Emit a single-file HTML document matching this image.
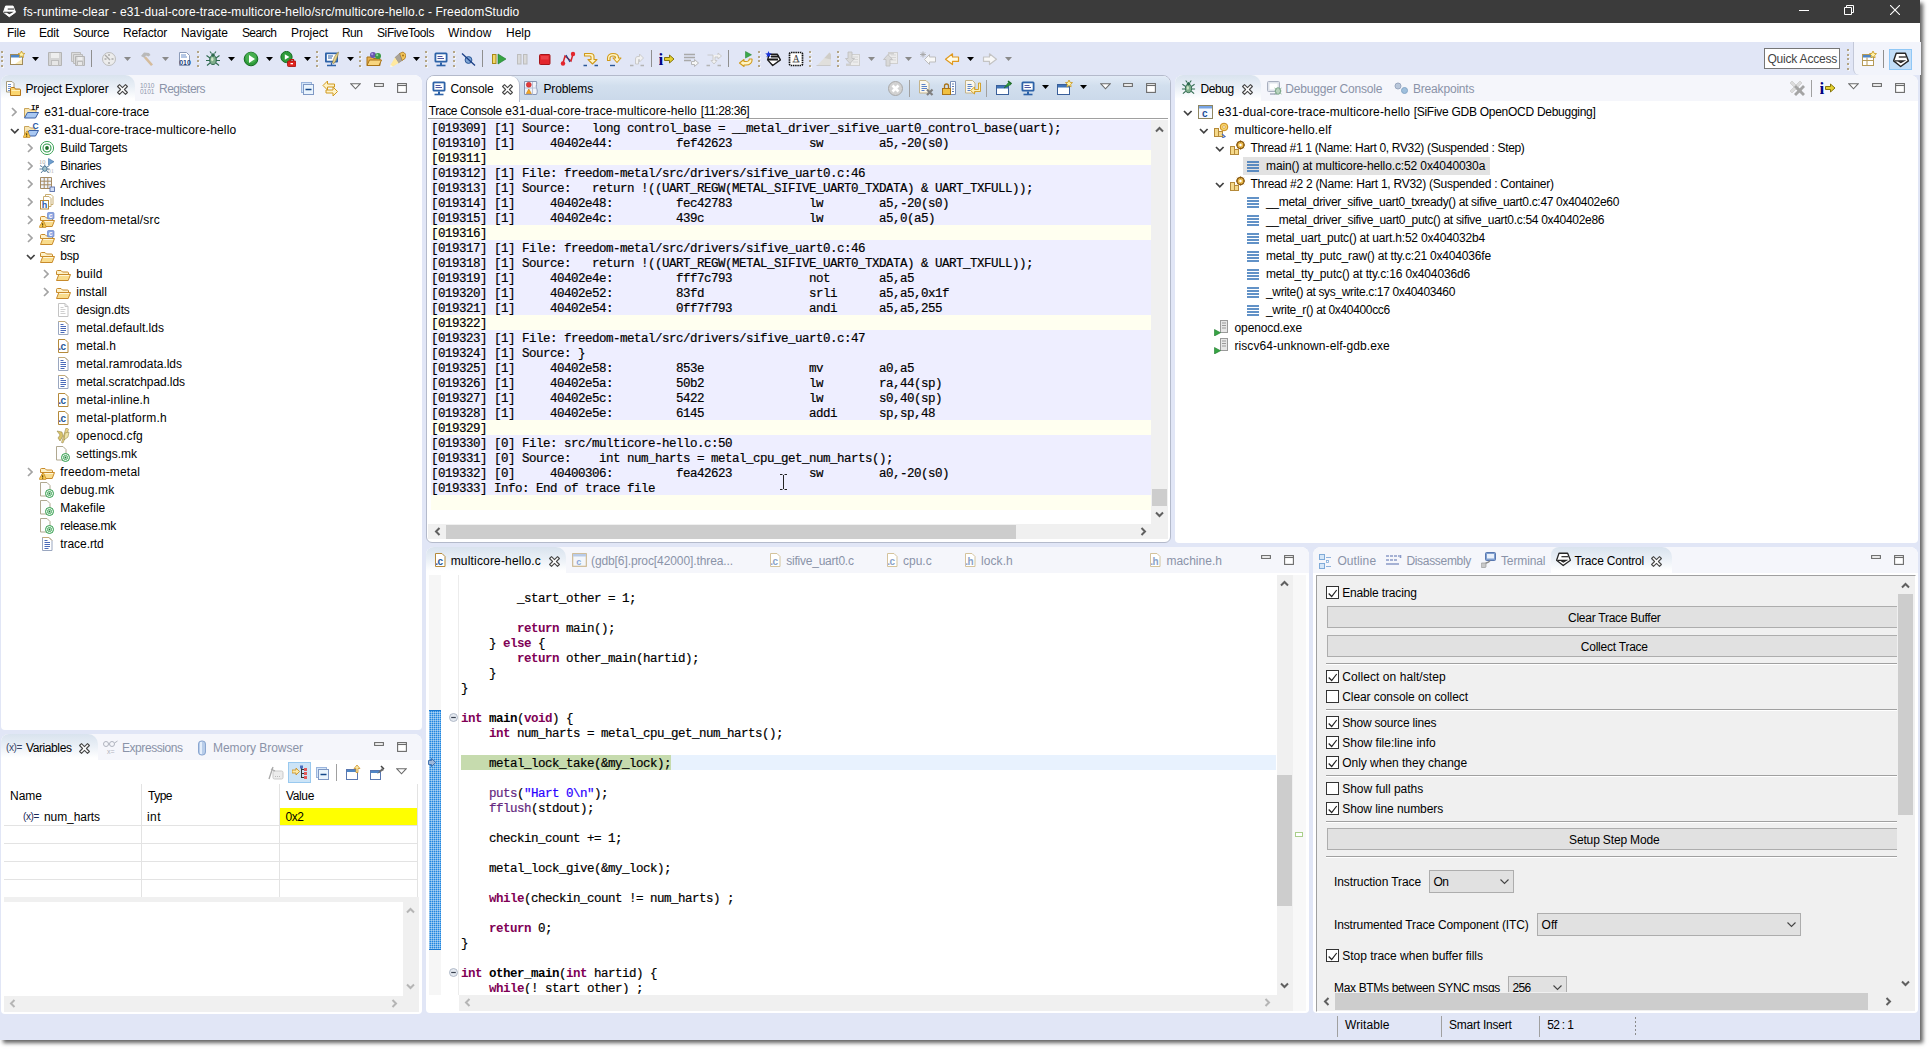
<!DOCTYPE html>
<html><head><meta charset="utf-8"><title>FreedomStudio</title><style>
html,body{margin:0;padding:0;background:#fff;}
body{width:1930px;height:1050px;position:relative;overflow:hidden;font:12px "Liberation Sans",sans-serif;color:#000;}
div,span,svg{position:absolute;}
.t{white-space:pre;line-height:18px;}
.m{white-space:pre;font-family:"Liberation Mono",monospace;font-size:12.5px;letter-spacing:-.5px;line-height:15px;-webkit-text-stroke:.2px;}
.k{font-weight:bold;color:#7f0055;position:static;-webkit-text-stroke:0;}
.s{color:#2a00ff;position:static;}
.f{color:#642880;position:static;}
.b{font-weight:bold;position:static;-webkit-text-stroke:0;}
.g{color:#8a8f99;}
.sh{left:0;top:0;width:1920px;height:1040px;box-shadow:3px 3px 4px 0 rgba(0,0,0,.62);}
.pnl{background:#fff;border-radius:7px 7px 3px 3px;overflow:hidden;}
</style></head><body>
<div class="sh"></div>
<div style="left:0px;top:0px;width:1920px;height:1040px;background:#e1e6f6;"></div>
<div style="left:0px;top:0px;width:1920px;height:23px;background:#3b3b3b;"></div>
<svg style="left:3px;top:5px;" width="13" height="13" viewBox="0 0 16 16"><path d="M3.200 1.300h9.200l3 7.600-7.700 5.600L.600 8.900z" fill="#fff" stroke="#fff" stroke-width="1.200" stroke-linejoin="round"/><path d="M5.800 5h8" stroke="#3b3b3b" stroke-width="1.400"/><path d="M.800 8.900h10L7.800 10.700 5.500 9.300" stroke="#3b3b3b" stroke-width="1.400" fill="none"/></svg>
<span class="t" style="left:23.3px;top:4px;line-height:17px;color:#fff;letter-spacing:0.136px;">fs-runtime-clear - e31-dual-core-trace-multicore-hello/src/multicore-hello.c - FreedomStudio</span>
<svg style="left:1799px;top:10px;" width="10" height="1" viewBox="0 0 10 1"><path d="M0 .5h10" stroke="#fff" stroke-width="1"/></svg>
<svg style="left:1844px;top:5px;" width="10" height="10" viewBox="0 0 10 10"><path d="M2.500 2.500V.500h7v7h-2M.500 2.500h7v7h-7z" fill="none" stroke="#fff" stroke-width="1"/></svg>
<svg style="left:1890px;top:5px;" width="10" height="10" viewBox="0 0 10 10"><path d="M0 0l10 10M10 0L0 10" stroke="#fff" stroke-width="1.100"/></svg>
<div style="left:0px;top:23px;width:1920px;height:19px;background:#fff;"></div>
<span class="t" style="left:7px;top:24px;letter-spacing:-0.209px;">File</span>
<span class="t" style="left:39px;top:24px;letter-spacing:-0.170px;">Edit</span>
<span class="t" style="left:73px;top:24px;letter-spacing:-0.337px;">Source</span>
<span class="t" style="left:123px;top:24px;letter-spacing:-0.169px;">Refactor</span>
<span class="t" style="left:181px;top:24px;letter-spacing:-0.045px;">Navigate</span>
<span class="t" style="left:242px;top:24px;letter-spacing:-0.637px;">Search</span>
<span class="t" style="left:291px;top:24px;letter-spacing:-0.050px;">Project</span>
<span class="t" style="left:342px;top:24px;letter-spacing:-0.571px;">Run</span>
<span class="t" style="left:377px;top:24px;letter-spacing:-0.396px;">SiFiveTools</span>
<span class="t" style="left:448px;top:24px;letter-spacing:0.137px;">Window</span>
<span class="t" style="left:506px;top:24px;letter-spacing:0.005px;">Help</span>
<div style="left:1px;top:51.0px;width:2px;height:2px;background:#b3a585;box-shadow:1px 1px 0 rgba(255,255,255,.6);"></div>
<div style="left:1px;top:55.7px;width:2px;height:2px;background:#b3a585;box-shadow:1px 1px 0 rgba(255,255,255,.6);"></div>
<div style="left:1px;top:60.3px;width:2px;height:2px;background:#b3a585;box-shadow:1px 1px 0 rgba(255,255,255,.6);"></div>
<div style="left:1px;top:65.0px;width:2px;height:2px;background:#b3a585;box-shadow:1px 1px 0 rgba(255,255,255,.6);"></div>
<svg style="left:9px;top:51px;" width="16" height="16" viewBox="0 0 16 16"><rect x="1.5" y="3.5" width="12" height="10" fill="#fff" stroke="#a08a5a"/><rect x="2" y="4" width="11" height="2.5" fill="#4f86c6"/><path d="M12.5 0l1 2.2 2.3.3-1.7 1.6.4 2.3-2-1.1-2 1.1.4-2.3L9.2 2.5l2.3-.3z" fill="#fff3a8" stroke="#c9971c" stroke-width=".8"/><path d="M6 13l7-5v5z" fill="#f6e3a6" opacity=".8"/></svg>
<svg style="left:32px;top:57px;" width="7" height="4" viewBox="0 0 7 4"><path d="M0 0h7l-3.5 4z" fill="#000"/></svg>
<svg style="left:47px;top:51px;" width="16" height="16" viewBox="0 0 16 16"><path d="M1.5 1.5h13v13h-13z" fill="#d4d4d4" stroke="#b4b4b4"/><rect x="4" y="2" width="8" height="5" fill="#eee"/><rect x="4.5" y="9.5" width="7" height="5" fill="#e6e6e6" stroke="#bdbdbd"/></svg>
<svg style="left:70px;top:51px;" width="16" height="16" viewBox="0 0 16 16"><path d="M1.5 1.5h9v9h-9z" fill="#dcdcdc" stroke="#bcbcbc"/><path d="M3.5 3.5h9v9h-9z" fill="#dcdcdc" stroke="#bcbcbc"/><path d="M5.5 5.5h9v9h-9z" fill="#d4d4d4" stroke="#b4b4b4"/><rect x="7.5" y="6" width="5" height="3" fill="#eee"/><rect x="7.5" y="10.5" width="5" height="4" fill="#e8e8e8" stroke="#bdbdbd"/></svg>
<div style="left:91px;top:50px;width:1px;height:17px;background:#8f8f8f;"></div>
<svg style="left:101px;top:51px;" width="16" height="16" viewBox="0 0 16 16"><circle cx="8" cy="8" r="6.5" fill="#ececec" stroke="#bdbdbd"/><path d="M4 4l5 5M8 3v2M12.5 8h-2M8 13v-2M3.5 8h2" stroke="#aaa" stroke-width="1.4" fill="none"/></svg>
<svg style="left:124px;top:57px;" width="7" height="4" viewBox="0 0 7 4"><path d="M0 0h7l-3.5 4z" fill="#8a8a8a"/></svg>
<svg style="left:139px;top:51px;" width="16" height="16" viewBox="0 0 16 16"><path d="M2 5l3-3.5 5 .5 1.5 2-2 1.5-2.5-1L5.5 7z" fill="#b9b9b9"/><path d="M7 5.5l7 8-2 1.5-7-8z" fill="#d2b48c" opacity=".85"/></svg>
<svg style="left:162px;top:57px;" width="7" height="4" viewBox="0 0 7 4"><path d="M0 0h7l-3.5 4z" fill="#8a8a8a"/></svg>
<svg style="left:176px;top:51px;" width="16" height="16" viewBox="0 0 16 16"><path d="M3.5 1.5h7l3 3v10h-10z" fill="#fff" stroke="#8c9bb8"/><path d="M5 4h5M5 6h6" stroke="#6b8fc9"/><text x="3.2" y="13.5" font-family="Liberation Sans" font-size="7" font-weight="bold" fill="#1d3f7a">010</text></svg>
<div style="left:197px;top:51.0px;width:2px;height:2px;background:#b3a585;box-shadow:1px 1px 0 rgba(255,255,255,.6);"></div>
<div style="left:197px;top:55.7px;width:2px;height:2px;background:#b3a585;box-shadow:1px 1px 0 rgba(255,255,255,.6);"></div>
<div style="left:197px;top:60.3px;width:2px;height:2px;background:#b3a585;box-shadow:1px 1px 0 rgba(255,255,255,.6);"></div>
<div style="left:197px;top:65.0px;width:2px;height:2px;background:#b3a585;box-shadow:1px 1px 0 rgba(255,255,255,.6);"></div>
<svg style="left:205px;top:51px;" width="16" height="16" viewBox="0 0 16 16"><ellipse cx="8" cy="9" rx="3.3" ry="4.5" fill="#7fae8b" stroke="#2f6a4f"/><circle cx="8" cy="4" r="1.8" fill="#2f6a4f"/><path d="M5 7L1.5 4.5M5 9.5H1M5 12l-3 2.5M11 7l3.5-2.5M11 9.5h4M11 12l3 2.5M6.5 2.5L5 .5M9.500 2.5L11 .5" stroke="#2f6a4f" stroke-width="1.1" fill="none"/><ellipse cx="7.3" cy="8.3" rx="1.2" ry="2" fill="#cfe6c8"/></svg>
<svg style="left:228px;top:57px;" width="7" height="4" viewBox="0 0 7 4"><path d="M0 0h7l-3.5 4z" fill="#000"/></svg>
<svg style="left:243px;top:51px;" width="16" height="16" viewBox="0 0 16 16"><circle cx="8" cy="8" r="6.8" fill="#2e9b3a" stroke="#156b22"/><circle cx="8" cy="6.5" r="5.5" fill="#5bc061" opacity=".55"/><path d="M6 4l6 4-6 4z" fill="#fff"/></svg>
<svg style="left:266px;top:57px;" width="7" height="4" viewBox="0 0 7 4"><path d="M0 0h7l-3.5 4z" fill="#000"/></svg>
<svg style="left:280px;top:51px;" width="16" height="16" viewBox="0 0 16 16"><circle cx="6.5" cy="6" r="5.6" fill="#2e9b3a" stroke="#156b22"/><path d="M4.8 3.2l4.6 2.8-4.6 2.800z" fill="#fff"/><rect x="7.5" y="10" width="8.5" height="5.500" rx="1" fill="#e0241e" stroke="#a00e0a" stroke-width=".8"/><path d="M10 10V8.500h3.500V10" stroke="#c0150f" fill="none" stroke-width="1.2"/><rect x="10.5" y="12" width="2.5" height="1.3" fill="#fff"/></svg>
<svg style="left:304px;top:57px;" width="7" height="4" viewBox="0 0 7 4"><path d="M0 0h7l-3.5 4z" fill="#000"/></svg>
<div style="left:316px;top:51.0px;width:2px;height:2px;background:#b3a585;box-shadow:1px 1px 0 rgba(255,255,255,.6);"></div>
<div style="left:316px;top:55.7px;width:2px;height:2px;background:#b3a585;box-shadow:1px 1px 0 rgba(255,255,255,.6);"></div>
<div style="left:316px;top:60.3px;width:2px;height:2px;background:#b3a585;box-shadow:1px 1px 0 rgba(255,255,255,.6);"></div>
<div style="left:316px;top:65.0px;width:2px;height:2px;background:#b3a585;box-shadow:1px 1px 0 rgba(255,255,255,.6);"></div>
<svg style="left:324px;top:51px;" width="16" height="16" viewBox="0 0 16 16"><rect x="1" y="1.5" width="13" height="10" rx="1" fill="#2d62a8"/><rect x="2.8" y="3.2" width="9.4" height="6.500" fill="#fff"/><path d="M4 5h5M4 7h4" stroke="#2d62a8"/><path d="M3 14.5h9M7.500 11.500v3" stroke="#2d62a8" stroke-width="1.300"/><path d="M14.5 1c-3 2-5 6-6 11l1.500.5c2-3 4-7 4.500-11.500z" fill="#e8d38a" stroke="#8a7a3a" stroke-width=".6"/></svg>
<svg style="left:347px;top:57px;" width="7" height="4" viewBox="0 0 7 4"><path d="M0 0h7l-3.5 4z" fill="#000"/></svg>
<div style="left:359px;top:51.0px;width:2px;height:2px;background:#b3a585;box-shadow:1px 1px 0 rgba(255,255,255,.6);"></div>
<div style="left:359px;top:55.7px;width:2px;height:2px;background:#b3a585;box-shadow:1px 1px 0 rgba(255,255,255,.6);"></div>
<div style="left:359px;top:60.3px;width:2px;height:2px;background:#b3a585;box-shadow:1px 1px 0 rgba(255,255,255,.6);"></div>
<div style="left:359px;top:65.0px;width:2px;height:2px;background:#b3a585;box-shadow:1px 1px 0 rgba(255,255,255,.6);"></div>
<svg style="left:366px;top:51px;" width="16" height="16" viewBox="0 0 16 16"><path d="M1 6h5l1.500 1.500h6.500v7h-13z" fill="#e6b04d" stroke="#a97318"/><path d="M1 14.5l2.500-5.500h12l-2.500 5.500z" fill="#f7d580" stroke="#a97318"/><circle cx="7" cy="4" r="3" fill="#6a55b0"/><circle cx="6.2" cy="3.2" r="1.100" fill="#a99be0"/><circle cx="12" cy="5" r="3" fill="#3c9a48"/><circle cx="11.2" cy="4.2" r="1.100" fill="#8fd59a"/></svg>
<svg style="left:390px;top:51px;" width="16" height="16" viewBox="0 0 16 16"><path d="M9.500 2.500l3.500-1.500 3 2.500-1 4-3 2z" fill="#f2c55a" stroke="#a97318" stroke-width=".8"/><circle cx="13" cy="4.500" r="1" fill="#a97318"/><path d="M9.500 2.500l2.500 7-3.500 2.500-3.500-5.500z" fill="#a9a39a" stroke="#8a7a5a" stroke-width=".5"/><path d="M5 6.500l3.500 5.500L3 15.500.500 14z" fill="#ffe9a0"/><path d="M.500 14l2.500 1.500-2.800.500z" fill="#fffbe0"/></svg>
<svg style="left:413px;top:57px;" width="7" height="4" viewBox="0 0 7 4"><path d="M0 0h7l-3.5 4z" fill="#000"/></svg>
<div style="left:425px;top:51.0px;width:2px;height:2px;background:#b3a585;box-shadow:1px 1px 0 rgba(255,255,255,.6);"></div>
<div style="left:425px;top:55.7px;width:2px;height:2px;background:#b3a585;box-shadow:1px 1px 0 rgba(255,255,255,.6);"></div>
<div style="left:425px;top:60.3px;width:2px;height:2px;background:#b3a585;box-shadow:1px 1px 0 rgba(255,255,255,.6);"></div>
<div style="left:425px;top:65.0px;width:2px;height:2px;background:#b3a585;box-shadow:1px 1px 0 rgba(255,255,255,.6);"></div>
<svg style="left:433px;top:51px;" width="16" height="16" viewBox="0 0 16 16"><rect x="1.5" y="1.500" width="13" height="10" rx="1.500" fill="#2d62a8"/><rect x="3.300" y="3.300" width="9.400" height="6.400" fill="#fff"/><path d="M4.500 5.500h5M4.500 7.500h6.500" stroke="#4b55a0"/><path d="M3.500 14.500h9" stroke="#2d62a8" stroke-width="1.600"/><path d="M8 11.500v3" stroke="#2d62a8" stroke-width="2"/></svg>
<div style="left:453px;top:51.0px;width:2px;height:2px;background:#b3a585;box-shadow:1px 1px 0 rgba(255,255,255,.6);"></div>
<div style="left:453px;top:55.7px;width:2px;height:2px;background:#b3a585;box-shadow:1px 1px 0 rgba(255,255,255,.6);"></div>
<div style="left:453px;top:60.3px;width:2px;height:2px;background:#b3a585;box-shadow:1px 1px 0 rgba(255,255,255,.6);"></div>
<div style="left:453px;top:65.0px;width:2px;height:2px;background:#b3a585;box-shadow:1px 1px 0 rgba(255,255,255,.6);"></div>
<svg style="left:460px;top:51px;" width="16" height="16" viewBox="0 0 16 16"><circle cx="8.500" cy="9" r="3.400" fill="#7fa6d6" stroke="#2b5797"/><path d="M2 2.500l13 12" stroke="#1b3f86" stroke-width="1.300"/></svg>
<div style="left:482px;top:50px;width:1px;height:17px;background:#8f8f8f;"></div>
<svg style="left:491px;top:51px;" width="16" height="16" viewBox="0 0 16 16"><rect x="1.500" y="3.500" width="3.500" height="9" fill="#f3d768" stroke="#a88916"/><path d="M7 3l8 5-8 5z" fill="#36a443" stroke="#1d7a2a" stroke-width=".6"/></svg>
<svg style="left:514px;top:51px;" width="16" height="16" viewBox="0 0 16 16"><rect x="3.500" y="3.500" width="3.500" height="9.500" fill="#dadada" stroke="#bdbdbd"/><rect x="9.500" y="3.500" width="3.500" height="9.500" fill="#dadada" stroke="#bdbdbd"/></svg>
<svg style="left:537px;top:51px;" width="16" height="16" viewBox="0 0 16 16"><rect x="2.500" y="3.500" width="10.500" height="10" rx="1" fill="#e3262d" stroke="#a5161b"/><rect x="4" y="5" width="7.500" height="3.500" fill="#f0545a" opacity=".6"/></svg>
<svg style="left:560px;top:51px;" width="16" height="16" viewBox="0 0 16 16"><path d="M3 12l2-7 6 5 2-7" stroke="#d4252c" stroke-width="1.500" fill="none"/><circle cx="3" cy="12.500" r="2.200" fill="#e3262d"/><circle cx="13" cy="3" r="2.200" fill="#e3262d"/><path d="M6 4l4 7" stroke="#1b3f86" stroke-width="1.200"/></svg>
<svg style="left:583px;top:51px;" width="16" height="16" viewBox="0 0 16 16"><path d="M1.500 2.500h6c2.500 0 3.500 1 3.500 3v3h3L9.500 13 5 8.500h3V6c0-.700-.300-1-1-1H1.500z" fill="#fff4c4" stroke="#d19a1a" stroke-width="1.100" stroke-linejoin="round"/><path d="M.500 14.500h3.500M11.500 14.500H15" stroke="#2b5797" stroke-width="1.400"/></svg>
<svg style="left:606px;top:51px;" width="16" height="16" viewBox="0 0 16 16"><path d="M1.500 9.500V7c0-3 2.500-4.500 5.500-4.500S12.500 4 12.500 6.500v.500H15l-4 4.500-4-4.500h2.500v-.500c0-1-.800-1.500-2.500-1.500S4 5.500 4 7v2.500z" fill="#fff4c4" stroke="#d19a1a" stroke-width="1.100" stroke-linejoin="round"/><path d="M4 14.500h5" stroke="#2b5797" stroke-width="1.400"/></svg>
<svg style="left:629px;top:51px;" width="16" height="16" viewBox="0 0 16 16"><path d="M6.500 13V8c0-1.500.800-2.500 2.500-2.500h1.500V3L14.500 7l-4 4V8.500H9.500V13z" fill="#f1f1f1" stroke="#c6c6c6" stroke-width=".9" stroke-linejoin="round"/><path d="M1 14.500h3.500M11.500 14.500H15" stroke="#b4b4b4" stroke-width="1.400"/></svg>
<div style="left:651px;top:50px;width:1px;height:17px;background:#8f8f8f;"></div>
<svg style="left:659px;top:51px;" width="16" height="16" viewBox="0 0 16 16"><text x="-.500" y="13.500" font-family="Liberation Serif" font-size="17" font-weight="bold" fill="#000080">i</text><path d="M5.500 6.500h5V4L15 8l-4.500 4V9.500h-5z" fill="#e4d030" stroke="#7a6a00" stroke-width=".9" stroke-linejoin="round"/></svg>
<svg style="left:683px;top:51px;" width="16" height="16" viewBox="0 0 16 16"><path d="M1 3.500h11M1 6.500h11M1 9.500h7" stroke="#a9a9a9" stroke-width="1.600"/><path d="M8.500 10.500h3V8.500L15.500 12l-4 3.500v-2h-3z" fill="#f6f6f6" stroke="#b0b0b0" stroke-width=".9" stroke-linejoin="round"/></svg>
<svg style="left:706px;top:51px;" width="16" height="16" viewBox="0 0 16 16"><path d="M1.500 4h5.500v5.500H5l3 3.500 3-3.500H9V6h3v2l3.500-3L12 2v2" fill="#f2f2f2" stroke="#c6c6c6" stroke-width=".9" stroke-linejoin="round"/><path d="M.500 14.500H4M11.500 14.500H15" stroke="#b4b4b4" stroke-width="1.400"/></svg>
<div style="left:728px;top:50px;width:1px;height:17px;background:#8f8f8f;"></div>
<svg style="left:738px;top:51px;" width="16" height="16" viewBox="0 0 16 16"><path d="M7.500 .500l6 3.300-6 3.300z" fill="#3aa84a" stroke="#1d7a2a" stroke-width=".5"/><path d="M14 8c.500 3.500-2 6-6 6H6v1.500L1.500 12 6 8.500V10.500h2c2 0 3.300-.800 3.200-2.500z" fill="#fff4c4" stroke="#d19a1a" stroke-width="1.100" stroke-linejoin="round"/></svg>
<div style="left:758px;top:51.0px;width:2px;height:2px;background:#b3a585;box-shadow:1px 1px 0 rgba(255,255,255,.6);"></div>
<div style="left:758px;top:55.7px;width:2px;height:2px;background:#b3a585;box-shadow:1px 1px 0 rgba(255,255,255,.6);"></div>
<div style="left:758px;top:60.3px;width:2px;height:2px;background:#b3a585;box-shadow:1px 1px 0 rgba(255,255,255,.6);"></div>
<div style="left:758px;top:65.0px;width:2px;height:2px;background:#b3a585;box-shadow:1px 1px 0 rgba(255,255,255,.6);"></div>
<svg style="left:765px;top:51px;" width="16" height="16" viewBox="0 0 16 16"><path d="M4.200 3.300h8.200l3 5.600-7.700 5.600L2.600 8.900z" fill="#fff" stroke="#1a1a1a" stroke-width="1.400" stroke-linejoin="round"/><path d="M6 5.500h8M3 8.500h10" stroke="#1a1a1a" stroke-width="1.800"/><path d="M3.500 0l.9 2.300 2.400.100-1.900 1.500.7 2.300-2.100-1.300-2 1.300.6-2.300L.2 2.400l2.400-.100z" fill="#1b36d8"/></svg>
<svg style="left:788px;top:51px;" width="16" height="16" viewBox="0 0 16 16"><rect x="1.500" y="1.500" width="13" height="13" rx="1.500" fill="#fff" stroke="#111" stroke-width="1.700" stroke-dasharray="1.500 .700"/><text x="4.800" y="11.300" font-family="Liberation Serif" font-size="9.500" fill="#333">A</text><rect x="4.500" y="10.600" width="7" height="1" fill="#777"/></svg>
<div style="left:809px;top:51.0px;width:2px;height:2px;background:#b3a585;box-shadow:1px 1px 0 rgba(255,255,255,.6);"></div>
<div style="left:809px;top:55.7px;width:2px;height:2px;background:#b3a585;box-shadow:1px 1px 0 rgba(255,255,255,.6);"></div>
<div style="left:809px;top:60.3px;width:2px;height:2px;background:#b3a585;box-shadow:1px 1px 0 rgba(255,255,255,.6);"></div>
<div style="left:809px;top:65.0px;width:2px;height:2px;background:#b3a585;box-shadow:1px 1px 0 rgba(255,255,255,.6);"></div>
<svg style="left:816px;top:51px;" width="16" height="16" viewBox="0 0 16 16"><path d="M1 14.500L13.500 1.500l1.500 1.500v11.500z" fill="#e0dfdc"/><path d="M.500 14.500h14" stroke="#c9c9c9"/><path d="M8.500 7l5-5.500 1.500 2v5z" fill="#cfcdc8"/></svg>
<div style="left:837px;top:51.0px;width:2px;height:2px;background:#b3a585;box-shadow:1px 1px 0 rgba(255,255,255,.6);"></div>
<div style="left:837px;top:55.7px;width:2px;height:2px;background:#b3a585;box-shadow:1px 1px 0 rgba(255,255,255,.6);"></div>
<div style="left:837px;top:60.3px;width:2px;height:2px;background:#b3a585;box-shadow:1px 1px 0 rgba(255,255,255,.6);"></div>
<div style="left:837px;top:65.0px;width:2px;height:2px;background:#b3a585;box-shadow:1px 1px 0 rgba(255,255,255,.6);"></div>
<svg style="left:845px;top:51px;" width="16" height="16" viewBox="0 0 16 16"><rect x="5.500" y="3.500" width="9" height="11" fill="#ececec" stroke="#cfcfcf"/><path d="M8 6h5M8 8.500h5M8 11h5" stroke="#d6d6d6"/><path d="M3 1h4v6.500h2.500L5 12.500.5 7.500H3z" fill="#d9d9d9" stroke="#bdbdbd" stroke-width=".8"/><rect x="1" y="12.500" width="5" height="2.500" fill="#cfcfcf"/></svg>
<svg style="left:868px;top:57px;" width="7" height="4" viewBox="0 0 7 4"><path d="M0 0h7l-3.5 4z" fill="#8a8a8a"/></svg>
<svg style="left:883px;top:51px;" width="16" height="16" viewBox="0 0 16 16"><rect x="5.500" y="1.500" width="9" height="11" fill="#ececec" stroke="#cfcfcf"/><path d="M8 4h5M8 6.500h5M8 9h5" stroke="#d6d6d6"/><path d="M3 15h4V8.500h2.500L5 3.500.5 8.500H3z" fill="#d9d9d9" stroke="#bdbdbd" stroke-width=".8"/><rect x="6" y="1" width="5" height="2.500" fill="#cfcfcf"/></svg>
<svg style="left:905px;top:57px;" width="7" height="4" viewBox="0 0 7 4"><path d="M0 0h7l-3.5 4z" fill="#8a8a8a"/></svg>
<svg style="left:920px;top:51px;" width="16" height="16" viewBox="0 0 16 16"><path d="M15.500 6h-6V3.500L4.500 8.500l5 5V11h6z" fill="#f8f8f8" stroke="#bdbdbd" stroke-width="1" stroke-linejoin="round"/><path d="M3 .500v6M0 3.500h6M1 1.500l4 4M5 1.500l-4 4" stroke="#a6a6a6" stroke-width=".9"/></svg>
<svg style="left:944px;top:51px;" width="16" height="16" viewBox="0 0 16 16"><path d="M14.500 6H8.500V2.800L1.500 8.200l7 5.400v-3.200h6z" fill="#fffbe6" stroke="#e09a20" stroke-width="1.200" stroke-linejoin="round"/></svg>
<svg style="left:967px;top:57px;" width="7" height="4" viewBox="0 0 7 4"><path d="M0 0h7l-3.5 4z" fill="#000"/></svg>
<svg style="left:982px;top:51px;" width="16" height="16" viewBox="0 0 16 16"><path d="M1.500 6h6V2.800l7 5.400-7 5.400v-3.200h-6z" fill="#f8f8f8" stroke="#c4c4c4" stroke-width="1.200" stroke-linejoin="round"/></svg>
<svg style="left:1005px;top:57px;" width="7" height="4" viewBox="0 0 7 4"><path d="M0 0h7l-3.5 4z" fill="#8a8a8a"/></svg>
<div style="left:1853px;top:42px;width:67px;height:33px;background:#f2f4fb;border-left:1px solid #c3c8d8;border-bottom-left-radius:6px;"></div>
<div style="left:1764px;top:48px;width:76px;height:21px;background:#fff;border:1px solid #767676;box-sizing:border-box;"></div>
<span class="t" style="left:1767.5px;top:51px;line-height:17px;color:#444;letter-spacing:-0.210px;">Quick Access</span>
<div style="left:1847px;top:49.0px;width:2px;height:2px;background:#b3a585;box-shadow:1px 1px 0 rgba(255,255,255,.6);"></div>
<div style="left:1847px;top:53.7px;width:2px;height:2px;background:#b3a585;box-shadow:1px 1px 0 rgba(255,255,255,.6);"></div>
<div style="left:1847px;top:58.3px;width:2px;height:2px;background:#b3a585;box-shadow:1px 1px 0 rgba(255,255,255,.6);"></div>
<div style="left:1847px;top:63.0px;width:2px;height:2px;background:#b3a585;box-shadow:1px 1px 0 rgba(255,255,255,.6);"></div>
<div style="left:1847px;top:67.7px;width:2px;height:2px;background:#b3a585;box-shadow:1px 1px 0 rgba(255,255,255,.6);"></div>
<svg style="left:1861px;top:51px;" width="16" height="16" viewBox="0 0 16 16"><rect x="1.500" y="3.500" width="11" height="11" fill="#fff" stroke="#b59a57"/><rect x="2" y="4" width="10" height="2.500" fill="#4f86c6"/><path d="M2 9.500h10M6 6.500v8" stroke="#b59a57"/><path d="M12 0l1 2.300 2.500.3-1.800 1.700.4 2.500-2.100-1.200-2.100 1.200.4-2.500L8.500 2.600l2.500-.3z" fill="#fff3a8" stroke="#c9971c" stroke-width=".8"/></svg>
<div style="left:1883px;top:50px;width:1px;height:18px;background:#8f8f8f;"></div>
<div style="left:1889px;top:49px;width:23px;height:21px;background:#c2def8;border:1px solid #90c8f6;box-sizing:border-box;"></div>
<svg style="left:1893px;top:52px;" width="16" height="16" viewBox="0 0 16 16"><path d="M3.200 1.300h9.200l3 7.600-7.700 5.600L.600 8.900z" fill="#fff" stroke="#262626" stroke-width="1.400" stroke-linejoin="round"/><path d="M5.800 5h7.300" stroke="#262626" stroke-width="1.300"/><path d="M1.600 8.900h9.200L7.800 10.600 5.500 9.200" stroke="#262626" stroke-width="1.300" fill="none"/></svg>
<div style="left:1px;top:75px;width:421px;height:655px;background:#fff;border-radius:8px 8px 4px 4px;"></div>
<div style="left:1px;top:75px;width:421px;height:26px;background:#f5f6fb;border-radius:8px 8px 0 0;"></div>
<div style="left:1px;top:75px;width:134px;height:26px;background:linear-gradient(#d9e3ee,#e9eff6 45%,#fff 92%);border-radius:8px 10px 0 0;"></div>
<svg style="left:6px;top:80px;" width="16" height="16" viewBox="0 0 16 16"><path d="M.500 1.500h5.500l2 2v8.500h-7.500z" fill="#fff" stroke="#a59a7a"/><path d="M2 4.500h3M2 6.500h3M2 8.500h2M2 10.500h2" stroke="#5a82c8" stroke-width=".9"/><path d="M4.500 15.500v-7c0-.600.400-1 1-1h2.500c.500 0 .800.300 1 .800l.300.700h4.200c.600 0 1 .400 1 1v5.500z" fill="#fbd670" stroke="#b5761a" stroke-linejoin="round"/><path d="M5.500 10.500h8.500" stroke="#fff0b8"/></svg>
<span class="t" style="left:25.5px;top:80px;letter-spacing:-0.148px;">Project Explorer</span>
<svg style="left:117px;top:84px;" width="11" height="11" viewBox="0 0 11 11"><path d="M.600 2.500l1.900-1.900 3 3 3-3 1.900 1.900-3 3 3 3-1.900 1.900-3-3-3 3L.600 8.500l3-3z" fill="#fff" stroke="#474747" stroke-width="1.100" stroke-linejoin="round"/></svg>
<svg style="left:140px;top:80px;" width="16" height="16" viewBox="0 0 16 16"><text x="0" y="7.500" font-family="Liberation Sans" font-size="6.800" fill="#8f98ad" textLength="14.500" lengthAdjust="spacingAndGlyphs">1010</text><text x="0" y="14" font-family="Liberation Sans" font-size="6.800" fill="#8f98ad" textLength="14.500" lengthAdjust="spacingAndGlyphs">0101</text></svg>
<span class="t" style="left:159px;top:80px;color:#8a93a8;letter-spacing:-0.520px;">Registers</span>
<svg style="left:300px;top:80px;" width="16" height="16" viewBox="0 0 16 16"><rect x="1.500" y="2.500" width="10" height="10" fill="#d3e5f8" stroke="#9ab4dc"/><rect x="3.500" y="4.500" width="10" height="10" fill="#eaf4fd" stroke="#7f98c4"/><path d="M5.500 9.500h6" stroke="#14488a" stroke-width="1.500"/></svg>
<svg style="left:321.5px;top:79.5px;" width="16" height="16" viewBox="0 0 16 16"><path d="M1 5.500L5.500 1v3h7v3h-7v3z" fill="#fff3c8" stroke="#d09a20" stroke-linejoin="round"/><path d="M15.500 11.500L11 7v3H4v3h7v3z" fill="#fff3c8" stroke="#d09a20" stroke-linejoin="round"/></svg>
<svg style="left:350px;top:83px;" width="11" height="7" viewBox="0 0 11 7"><path d="M.7.700h9.600L5.500 5.800z" fill="#fff" stroke="#6b6b6b" stroke-width="1.100"/></svg>
<svg style="left:374px;top:83px;" width="10" height="4" viewBox="0 0 10 4"><rect x=".600" y=".600" width="8.800" height="2.800" fill="#fff" stroke="#6b6b6b" stroke-width="1.100"/></svg>
<svg style="left:397px;top:83px;" width="10" height="10" viewBox="0 0 10 10"><rect x=".600" y=".600" width="8.800" height="8.800" fill="#fff" stroke="#6b6b6b" stroke-width="1.100"/><path d="M.6 2.500h8.800" stroke="#6b6b6b" stroke-width="1.100"/></svg>
<svg style="left:11px;top:107px;" width="6" height="10" viewBox="0 0 6 10"><path d="M1 1l4 4-4 4" fill="none" stroke="#a3a3a3" stroke-width="1.700"/></svg>
<svg style="left:23px;top:104px;" width="16" height="16" viewBox="0 0 16 16"><path d="M1.500 4.500h4.500l1.500 1.500H13v7H1.500z" fill="#f7e6b4" stroke="#c9a45a"/><path d="M1.500 14l3-5.500H15.500L12.500 14z" fill="#a9c8f2" stroke="#3c62a6"/><text x="8" y="6" font-family="Liberation Mono" font-size="7.500" font-weight="bold" fill="#111">IP</text></svg>
<span class="t" style="left:44.3px;top:103px;letter-spacing:0.015px;">e31-dual-core-trace</span>
<svg style="left:10px;top:128px;" width="10" height="6" viewBox="0 0 10 6"><path d="M1 1l3.800 3.800L8.600 1" fill="none" stroke="#404040" stroke-width="1.700"/></svg>
<svg style="left:23px;top:122px;" width="16" height="16" viewBox="0 0 16 16"><path d="M1.500 4.500h4.500l1.500 1.500H12v7H1.500z" fill="#f7e6b4" stroke="#c9a45a"/><path d="M3 14l3-5.500H15.500L12.500 14z" fill="#a9c8f2" stroke="#3c62a6"/><text x="9.500" y="6.500" font-family="Liberation Sans" font-size="8.500" font-weight="bold" fill="#2b5ba8">C</text><path d="M3.500 9.500c.500-1 .800-1 1.300 0L7 14.500c.300.700 0 1-.500 1H1c-.700 0-1-.400-.600-1z" fill="#f8c84a" stroke="#b5761a" stroke-width=".6"/><path d="M3.700 11.300v2.200M3.700 14.200v.700" stroke="#3a2a00" stroke-width="1"/></svg>
<span class="t" style="left:44.3px;top:121px;letter-spacing:0.150px;">e31-dual-core-trace-multicore-hello</span>
<svg style="left:27px;top:143px;" width="6" height="10" viewBox="0 0 6 10"><path d="M1 1l4 4-4 4" fill="none" stroke="#a3a3a3" stroke-width="1.700"/></svg>
<svg style="left:39px;top:140px;" width="16" height="16" viewBox="0 0 16 16"><circle cx="8" cy="8" r="6.600" fill="#fff" stroke="#2e9b4a" stroke-width=".9"/><circle cx="8" cy="8" r="4" fill="#fff" stroke="#2e9b4a" stroke-width="1.100"/><circle cx="8" cy="8" r="1.900" fill="#1f6f2a"/></svg>
<span class="t" style="left:60.3px;top:139px;letter-spacing:-0.166px;">Build Targets</span>
<svg style="left:27px;top:161px;" width="6" height="10" viewBox="0 0 6 10"><path d="M1 1l4 4-4 4" fill="none" stroke="#a3a3a3" stroke-width="1.700"/></svg>
<svg style="left:39px;top:158px;" width="16" height="16" viewBox="0 0 16 16"><text x="0" y="6" font-family="Liberation Serif" font-size="6.500" fill="#a8a8a8">10</text><text x="8.500" y="15" font-family="Liberation Serif" font-size="6.500" fill="#b8b8b8">01</text><path d="M9.500.500l5.500 3.200L9.500 7z" fill="#6f9fcf" stroke="#3d6ea5" stroke-width=".6"/><ellipse cx="5.800" cy="10.800" rx="2.200" ry="2.600" fill="#9fc0c8" stroke="#2f5f86" stroke-width=".8"/><path d="M3.500 9L1 7.500M3.500 11H.500M3.800 12.800L2 15M8 9l2.500-1.500M8 11h2.500M7.800 12.800L9.500 15M5.800 8V6.500" stroke="#2f5f86" stroke-width=".8"/></svg>
<span class="t" style="left:60.3px;top:157px;letter-spacing:-0.294px;">Binaries</span>
<svg style="left:27px;top:179px;" width="6" height="10" viewBox="0 0 6 10"><path d="M1 1l4 4-4 4" fill="none" stroke="#a3a3a3" stroke-width="1.700"/></svg>
<svg style="left:39px;top:176px;" width="16" height="16" viewBox="0 0 16 16"><rect x="1.500" y="1.500" width="11" height="11" fill="#eef2fb"/><path d="M1.500 1.500h11v11h-11zM1.500 5.200h11M1.500 8.800h11M5.200 1.500v11M8.800 1.500v11" fill="none" stroke="#a58a62" stroke-width="1"/><rect x="11" y="11" width="4.500" height="4.500" fill="#d4dff6" stroke="#5a6fa8" stroke-width=".9"/></svg>
<span class="t" style="left:60.3px;top:175px;letter-spacing:-0.127px;">Archives</span>
<svg style="left:27px;top:197px;" width="6" height="10" viewBox="0 0 6 10"><path d="M1 1l4 4-4 4" fill="none" stroke="#a3a3a3" stroke-width="1.700"/></svg>
<svg style="left:39px;top:194px;" width="16" height="16" viewBox="0 0 16 16"><path d="M6.500.500h5.500l2 2v8h-7.500z" fill="#fff" stroke="#c9ae72"/><path d="M4.500 2.500h5.500l2 2v8h-7.500z" fill="#fff" stroke="#c9ae72"/><rect x="1.500" y="6.500" width="8" height="8.500" fill="#fff" stroke="#b58a3a"/><text x="2.800" y="14" font-family="Liberation Sans" font-size="9" font-weight="bold" fill="#2b5ba8">h</text></svg>
<span class="t" style="left:60.3px;top:193px;letter-spacing:-0.149px;">Includes</span>
<svg style="left:27px;top:215px;" width="6" height="10" viewBox="0 0 6 10"><path d="M1 1l4 4-4 4" fill="none" stroke="#a3a3a3" stroke-width="1.700"/></svg>
<svg style="left:39px;top:212px;" width="16" height="16" viewBox="0 0 16 16"><path d="M1.500 8.500v-3c0-.600.400-1 1-1h3.500l1.500 1.500h5c.600 0 1 .400 1 1v1.500z" fill="#fdf1c8" stroke="#c88a2a"/><path d="M1.500 14.500l2.300-6H15.500l-2.300 6z" fill="#f9dc8c" stroke="#c88a2a" stroke-linejoin="round"/><path d="M4.300 9.500h9.800" stroke="#fff6d8" stroke-width="1"/><rect x="8.500" y=".500" width="6.500" height="6.500" rx="1" fill="#8aa4e0" stroke="#6a86cc" stroke-width=".7"/><text x="9.800" y="6" font-family="Liberation Sans" font-size="7" font-weight="bold" fill="#fff">c</text><path d="M3.500 9.500c.500-1 .800-1 1.300 0L7 14.500c.300.700 0 1-.500 1H1c-.700 0-1-.400-.600-1z" fill="#f8c84a" stroke="#b5761a" stroke-width=".6"/><path d="M3.700 11.300v2.200M3.700 14.200v.700" stroke="#3a2a00" stroke-width="1"/></svg>
<span class="t" style="left:60.3px;top:211px;letter-spacing:0.165px;">freedom-metal/src</span>
<svg style="left:27px;top:233px;" width="6" height="10" viewBox="0 0 6 10"><path d="M1 1l4 4-4 4" fill="none" stroke="#a3a3a3" stroke-width="1.700"/></svg>
<svg style="left:39px;top:230px;" width="16" height="16" viewBox="0 0 16 16"><path d="M1.500 8.500v-3c0-.600.400-1 1-1h3.500l1.500 1.500h5c.600 0 1 .400 1 1v1.500z" fill="#fdf1c8" stroke="#c88a2a"/><path d="M1.500 14.500l2.300-6H15.500l-2.300 6z" fill="#f9dc8c" stroke="#c88a2a" stroke-linejoin="round"/><path d="M4.300 9.500h9.800" stroke="#fff6d8" stroke-width="1"/><rect x="8.500" y=".500" width="6.500" height="6.500" rx="1" fill="#8aa4e0" stroke="#6a86cc" stroke-width=".7"/><text x="9.800" y="6" font-family="Liberation Sans" font-size="7" font-weight="bold" fill="#fff">c</text></svg>
<span class="t" style="left:60.3px;top:229px;letter-spacing:-0.499px;">src</span>
<svg style="left:26px;top:254px;" width="10" height="6" viewBox="0 0 10 6"><path d="M1 1l3.800 3.800L8.600 1" fill="none" stroke="#404040" stroke-width="1.700"/></svg>
<svg style="left:39px;top:248px;" width="16" height="16" viewBox="0 0 16 16"><path d="M1.500 8.500v-3c0-.600.400-1 1-1h3.500l1.500 1.500h5c.600 0 1 .400 1 1v1.500z" fill="#fdf1c8" stroke="#c88a2a"/><path d="M1.500 14.500l2.300-6H15.500l-2.300 6z" fill="#f9dc8c" stroke="#c88a2a" stroke-linejoin="round"/><path d="M4.300 9.500h9.800" stroke="#fff6d8" stroke-width="1"/></svg>
<span class="t" style="left:60.3px;top:247px;letter-spacing:-0.216px;">bsp</span>
<svg style="left:43px;top:269px;" width="6" height="10" viewBox="0 0 6 10"><path d="M1 1l4 4-4 4" fill="none" stroke="#a3a3a3" stroke-width="1.700"/></svg>
<svg style="left:55px;top:266px;" width="16" height="16" viewBox="0 0 16 16"><path d="M1.500 8.500v-3c0-.600.400-1 1-1h3.500l1.500 1.500h5c.600 0 1 .400 1 1v1.500z" fill="#fdf1c8" stroke="#c88a2a"/><path d="M1.500 14.500l2.300-6H15.500l-2.300 6z" fill="#f9dc8c" stroke="#c88a2a" stroke-linejoin="round"/><path d="M4.300 9.500h9.800" stroke="#fff6d8" stroke-width="1"/></svg>
<span class="t" style="left:76.3px;top:265px;letter-spacing:0.210px;">build</span>
<svg style="left:43px;top:287px;" width="6" height="10" viewBox="0 0 6 10"><path d="M1 1l4 4-4 4" fill="none" stroke="#a3a3a3" stroke-width="1.700"/></svg>
<svg style="left:55px;top:284px;" width="16" height="16" viewBox="0 0 16 16"><path d="M1.500 8.500v-3c0-.600.400-1 1-1h3.500l1.500 1.500h5c.600 0 1 .400 1 1v1.500z" fill="#fdf1c8" stroke="#c88a2a"/><path d="M1.500 14.500l2.300-6H15.500l-2.300 6z" fill="#f9dc8c" stroke="#c88a2a" stroke-linejoin="round"/><path d="M4.300 9.500h9.800" stroke="#fff6d8" stroke-width="1"/></svg>
<span class="t" style="left:76.3px;top:283px;letter-spacing:-0.011px;">install</span>
<svg style="left:55px;top:302px;" width="16" height="16" viewBox="0 0 16 16"><path d="M3.500 1.500h6.500l3 3v10h-9.500z" fill="#fff" stroke="#c4c4c4"/><path d="M10 1.500v3h3" fill="none" stroke="#c4c4c4"/><path d="M5.500 5.500h3M5.500 7.500h5M5.500 9.500h4M5.500 11.500h5" stroke="#cfcfcf"/></svg>
<span class="t" style="left:76.3px;top:301px;letter-spacing:-0.130px;">design.dts</span>
<svg style="left:55px;top:320px;" width="16" height="16" viewBox="0 0 16 16"><path d="M3.500 1.500h6.500l3 3v10h-9.500z" fill="#fff" stroke="#9aa7c0"/><path d="M3.500 1.500h6.500l3 3" fill="none" stroke="#c4ab78"/><path d="M5.500 4.500h3M5.500 6.500h5.500M5.500 8.500h5.500M5.500 10.500h5.500M5.500 12.500h4" stroke="#4a6ab8"/></svg>
<span class="t" style="left:76.3px;top:319px;letter-spacing:0.019px;">metal.default.lds</span>
<svg style="left:55px;top:338px;" width="16" height="16" viewBox="0 0 16 16"><path d="M3.500 1.500h6.500l3 3v10h-9.500z" fill="#fff" stroke="#b58a3a"/><text x="3.300" y="12.300" font-family="Liberation Sans" font-size="10" font-weight="bold" fill="#2a5a9a" letter-spacing="-.6">.c</text></svg>
<span class="t" style="left:76.3px;top:337px;letter-spacing:0.035px;">metal.h</span>
<svg style="left:55px;top:356px;" width="16" height="16" viewBox="0 0 16 16"><path d="M3.500 1.500h6.500l3 3v10h-9.500z" fill="#fff" stroke="#9aa7c0"/><path d="M3.500 1.500h6.500l3 3" fill="none" stroke="#c4ab78"/><path d="M5.500 4.500h3M5.500 6.500h5.500M5.500 8.500h5.500M5.500 10.500h5.500M5.500 12.500h4" stroke="#4a6ab8"/></svg>
<span class="t" style="left:76.3px;top:355px;letter-spacing:-0.018px;">metal.ramrodata.lds</span>
<svg style="left:55px;top:374px;" width="16" height="16" viewBox="0 0 16 16"><path d="M3.500 1.500h6.500l3 3v10h-9.500z" fill="#fff" stroke="#9aa7c0"/><path d="M3.500 1.500h6.500l3 3" fill="none" stroke="#c4ab78"/><path d="M5.500 4.500h3M5.500 6.500h5.500M5.500 8.500h5.500M5.500 10.500h5.500M5.500 12.500h4" stroke="#4a6ab8"/></svg>
<span class="t" style="left:76.3px;top:373px;letter-spacing:-0.067px;">metal.scratchpad.lds</span>
<svg style="left:55px;top:392px;" width="16" height="16" viewBox="0 0 16 16"><path d="M3.500 1.500h6.500l3 3v10h-9.500z" fill="#fff" stroke="#b58a3a"/><text x="3.300" y="12.300" font-family="Liberation Sans" font-size="10" font-weight="bold" fill="#2a5a9a" letter-spacing="-.6">.c</text></svg>
<span class="t" style="left:76.3px;top:391px;letter-spacing:0.160px;">metal-inline.h</span>
<svg style="left:55px;top:410px;" width="16" height="16" viewBox="0 0 16 16"><path d="M3.500 1.500h6.500l3 3v10h-9.500z" fill="#fff" stroke="#b58a3a"/><text x="3.300" y="12.300" font-family="Liberation Sans" font-size="10" font-weight="bold" fill="#2a5a9a" letter-spacing="-.6">.c</text></svg>
<span class="t" style="left:76.3px;top:409px;letter-spacing:0.244px;">metal-platform.h</span>
<svg style="left:55px;top:428px;" width="16" height="16" viewBox="0 0 16 16"><path d="M11 0c1.500 0 2 .5 2.500 1.500L8 15l-1.500-.5z" fill="#e8d38a" stroke="#8a7a3a" stroke-width=".5"/><path d="M2 3l5 1 1 4-3 5-2-3 2-3z" fill="#d9c36a" stroke="#8a7a3a" stroke-width=".5"/><path d="M10 5l4-1-1 5-4 3z" fill="#efe4a8" stroke="#8a7a3a" stroke-width=".5"/></svg>
<span class="t" style="left:76.3px;top:427px;letter-spacing:0.111px;">openocd.cfg</span>
<svg style="left:55px;top:446px;" width="16" height="16" viewBox="0 0 16 16"><path d="M1.500.500h6.500l3 3v10.500h-9.500z" fill="#fdfdfd" stroke="#b0a890"/><circle cx="10.500" cy="11.500" r="4" fill="#f2fbf3" stroke="#2e9b4a"/><circle cx="10.500" cy="11.500" r="2.100" fill="#dff3e2" stroke="#2e9b4a" stroke-width=".8"/><circle cx="10.500" cy="11.500" r=".9" fill="#1f7f3a"/></svg>
<span class="t" style="left:76.3px;top:445px;">settings.mk</span>
<svg style="left:27px;top:467px;" width="6" height="10" viewBox="0 0 6 10"><path d="M1 1l4 4-4 4" fill="none" stroke="#a3a3a3" stroke-width="1.700"/></svg>
<svg style="left:39px;top:464px;" width="16" height="16" viewBox="0 0 16 16"><path d="M1.500 8.500v-3c0-.600.400-1 1-1h3.500l1.500 1.500h5c.600 0 1 .400 1 1v1.500z" fill="#fdf1c8" stroke="#c88a2a"/><path d="M1.500 14.500l2.300-6H15.500l-2.300 6z" fill="#f9dc8c" stroke="#c88a2a" stroke-linejoin="round"/><path d="M4.300 9.500h9.800" stroke="#fff6d8" stroke-width="1"/><path d="M3.500 9.500c.500-1 .800-1 1.300 0L7 14.500c.300.700 0 1-.500 1H1c-.700 0-1-.400-.600-1z" fill="#f8c84a" stroke="#b5761a" stroke-width=".6"/><path d="M3.700 11.300v2.200M3.700 14.200v.700" stroke="#3a2a00" stroke-width="1"/></svg>
<span class="t" style="left:60.3px;top:463px;letter-spacing:0.188px;">freedom-metal</span>
<svg style="left:39px;top:482px;" width="16" height="16" viewBox="0 0 16 16"><path d="M1.500.500h6.500l3 3v10.500h-9.500z" fill="#fdfdfd" stroke="#b0a890"/><circle cx="10.500" cy="11.500" r="4" fill="#f2fbf3" stroke="#2e9b4a"/><circle cx="10.500" cy="11.500" r="2.100" fill="#dff3e2" stroke="#2e9b4a" stroke-width=".8"/><circle cx="10.500" cy="11.500" r=".9" fill="#1f7f3a"/></svg>
<span class="t" style="left:60.3px;top:481px;letter-spacing:0.163px;">debug.mk</span>
<svg style="left:39px;top:500px;" width="16" height="16" viewBox="0 0 16 16"><path d="M1.500.500h6.500l3 3v10.500h-9.500z" fill="#fdfdfd" stroke="#b0a890"/><circle cx="10.500" cy="11.500" r="4" fill="#f2fbf3" stroke="#2e9b4a"/><circle cx="10.500" cy="11.500" r="2.100" fill="#dff3e2" stroke="#2e9b4a" stroke-width=".8"/><circle cx="10.500" cy="11.500" r=".9" fill="#1f7f3a"/></svg>
<span class="t" style="left:60.3px;top:499px;letter-spacing:0.040px;">Makefile</span>
<svg style="left:39px;top:518px;" width="16" height="16" viewBox="0 0 16 16"><path d="M1.500.500h6.500l3 3v10.500h-9.500z" fill="#fdfdfd" stroke="#b0a890"/><circle cx="10.500" cy="11.500" r="4" fill="#f2fbf3" stroke="#2e9b4a"/><circle cx="10.500" cy="11.500" r="2.100" fill="#dff3e2" stroke="#2e9b4a" stroke-width=".8"/><circle cx="10.500" cy="11.500" r=".9" fill="#1f7f3a"/></svg>
<span class="t" style="left:60.3px;top:517px;letter-spacing:-0.299px;">release.mk</span>
<svg style="left:39px;top:536px;" width="16" height="16" viewBox="0 0 16 16"><path d="M3.500 1.500h6.500l3 3v10h-9.500z" fill="#fff" stroke="#9aa7c0"/><path d="M3.500 1.500h6.500l3 3" fill="none" stroke="#c4ab78"/><path d="M5.500 4.500h3M5.500 6.500h5.500M5.500 8.500h5.500M5.500 10.500h5.500M5.500 12.500h4" stroke="#4a6ab8"/></svg>
<span class="t" style="left:60.3px;top:535px;letter-spacing:-0.069px;">trace.rtd</span>
<div style="left:1px;top:734px;width:421px;height:280px;background:#fff;border-radius:8px 8px 4px 4px;"></div>
<div style="left:1px;top:734px;width:421px;height:26px;background:#f5f6fb;border-radius:8px 8px 0 0;"></div>
<div style="left:1px;top:734px;width:97px;height:26px;background:linear-gradient(#d9e3ee,#e9eff6 45%,#fff 92%);border-radius:8px 10px 0 0;"></div>
<span class="t" style="left:6px;top:739px;font-size:10px;color:#3a4668;letter-spacing:-0.375px;">(x)=</span>
<span class="t" style="left:26px;top:739px;letter-spacing:-0.404px;">Variables</span>
<svg style="left:79px;top:743px;" width="11" height="11" viewBox="0 0 11 11"><path d="M.600 2.500l1.900-1.900 3 3 3-3 1.900 1.900-3 3 3 3-1.900 1.900-3-3-3 3L.600 8.500l3-3z" fill="#fff" stroke="#474747" stroke-width="1.100" stroke-linejoin="round"/></svg>
<svg style="left:102px;top:740px;" width="16" height="16" viewBox="0 0 16 16"><circle cx="4" cy="4" r="2.500" fill="none" stroke="#b0b4be"/><circle cx="10" cy="4" r="2.500" fill="none" stroke="#b0b4be"/><path d="M6.500 4h1M12.500 3l3-2" stroke="#b0b4be"/><text x="5" y="14" font-family="Liberation Sans" font-size="7" fill="#b0b4be">x=</text></svg>
<span class="t" style="left:122px;top:739px;color:#8a93a8;letter-spacing:-0.442px;">Expressions</span>
<svg style="left:197px;top:740px;" width="10" height="16" viewBox="0 0 10 16"><rect x="1.500" y="1" width="7" height="14" rx="3" fill="#b8cdea" stroke="#8aa6d0"/><rect x="3" y="2" width="2" height="12" fill="#e4eefb"/></svg>
<span class="t" style="left:213px;top:739px;color:#8a93a8;letter-spacing:-0.049px;">Memory Browser</span>
<svg style="left:374px;top:742px;" width="10" height="4" viewBox="0 0 10 4"><rect x=".600" y=".600" width="8.800" height="2.800" fill="#fff" stroke="#6b6b6b" stroke-width="1.100"/></svg>
<svg style="left:397px;top:742px;" width="10" height="10" viewBox="0 0 10 10"><rect x=".600" y=".600" width="8.800" height="8.800" fill="#fff" stroke="#6b6b6b" stroke-width="1.100"/><path d="M.6 2.500h8.800" stroke="#6b6b6b" stroke-width="1.100"/></svg>
<svg style="left:268px;top:765px;" width="16" height="16" viewBox="0 0 16 16"><rect x="5" y="6" width="10" height="8" rx="1.500" fill="#ececec" stroke="#c9c9c9"/><path d="M1 14L5 2M3 4l4 2" stroke="#a8a8a8" stroke-width="1.300"/><path d="M7 11.500h6" stroke="#bbb" stroke-dasharray="1 1"/></svg>
<div style="left:288px;top:762px;width:23px;height:21px;background:#cce4f7;border:1px solid #99c9ef;box-sizing:border-box;"></div>
<svg style="left:292px;top:765px;" width="16" height="16" viewBox="0 0 16 16"><path d="M0 5h4V3l3.500 3.500L4 10V8H0z" fill="#fbe9a6" stroke="#c98a1b" stroke-width=".8"/><path d="M9.500 2v11M9.500 4.500h3M9.500 8.500h3M9.500 12.500h3" stroke="#333"/><rect x="12" y="3" width="3" height="3" fill="#e35a5a"/><rect x="12" y="7" width="3" height="3" fill="#e35a5a"/><rect x="12" y="11" width="3" height="3" fill="#e35a5a"/><rect x="8" y=".500" width="3" height="3" fill="#4a6fc0"/></svg>
<svg style="left:315px;top:765px;" width="16" height="16" viewBox="0 0 16 16"><rect x="1.500" y="2.500" width="10" height="10" fill="#d3e5f8" stroke="#9ab4dc"/><rect x="3.500" y="4.500" width="10" height="10" fill="#eaf4fd" stroke="#7f98c4"/><path d="M5.500 9.500h6" stroke="#14488a" stroke-width="1.500"/></svg>
<div style="left:336px;top:764px;width:1px;height:17px;background:#a0a0a0;"></div>
<svg style="left:345px;top:765px;" width="16" height="16" viewBox="0 0 16 16"><rect x="1.500" y="4.500" width="11" height="10" fill="#fff" stroke="#5a78b0"/><rect x="2" y="5" width="10" height="2" fill="#4f86c6"/><path d="M12 0l3 3.500h-2v4h-2v-4h-2z" fill="#fbe9a6" stroke="#c98a1b" stroke-width=".7"/></svg>
<svg style="left:369px;top:765px;" width="16" height="16" viewBox="0 0 16 16"><rect x="1.500" y="5.500" width="10" height="9" fill="#fff" stroke="#5a78b0"/><rect x="2" y="6" width="9" height="2" fill="#4f86c6"/><path d="M8 9l5-6 2 2z" fill="#6a6a6a"/><path d="M12 1l3 3" stroke="#444" stroke-width="1.500"/></svg>
<svg style="left:396px;top:768px;" width="11" height="7" viewBox="0 0 11 7"><path d="M.7.700h9.600L5.500 5.800z" fill="#fff" stroke="#6b6b6b" stroke-width="1.100"/></svg>
<span class="t" style="left:10px;top:787px;">Name</span>
<span class="t" style="left:148px;top:787px;letter-spacing:-0.504px;">Type</span>
<span class="t" style="left:286px;top:787px;letter-spacing:-0.360px;">Value</span>
<div style="left:141px;top:784px;width:1px;height:113px;background:#e3e3e3;"></div>
<div style="left:279px;top:784px;width:1px;height:113px;background:#e3e3e3;"></div>
<div style="left:417px;top:784px;width:1px;height:113px;background:#e3e3e3;"></div>
<div style="left:4px;top:825px;width:414px;height:1px;background:#e3e3e3;"></div>
<div style="left:4px;top:843px;width:414px;height:1px;background:#e3e3e3;"></div>
<div style="left:4px;top:861px;width:414px;height:1px;background:#e3e3e3;"></div>
<div style="left:4px;top:879px;width:414px;height:1px;background:#e3e3e3;"></div>
<div style="left:280px;top:808px;width:137px;height:17px;background:#ffff00;"></div>
<span class="t" style="left:23px;top:809px;line-height:16px;font-size:10px;color:#1b2a5a;letter-spacing:-0.375px;">(x)=</span>
<span class="t" style="left:44px;top:808px;letter-spacing:-0.077px;">num_harts</span>
<span class="t" style="left:147px;top:808px;letter-spacing:0.442px;">int</span>
<span class="t" style="left:285.5px;top:808px;letter-spacing:-0.449px;">0x2</span>
<div style="left:4px;top:897px;width:415px;height:5px;background:#f0f0f0;"></div>
<div style="left:403px;top:902px;width:16px;height:94px;background:#f0f0f0;"></div>
<div style="left:4px;top:996px;width:415px;height:16px;background:#f0f0f0;"></div>
<svg style="left:406px;top:907px;" width="9" height="7" viewBox="0 0 9 7"><path d="M1 5.500l3.500-3.500L8 5.500" fill="none" stroke="#b5b5b5" stroke-width="2"/></svg>
<svg style="left:406px;top:983px;" width="9" height="7" viewBox="0 0 9 7"><path d="M1 1.500l3.500 3.500L8 1.500" fill="none" stroke="#b5b5b5" stroke-width="2"/></svg>
<svg style="left:9px;top:999px;" width="7" height="9" viewBox="0 0 7 9"><path d="M5.500 1L2 4.500 5.500 8" fill="none" stroke="#b5b5b5" stroke-width="2"/></svg>
<svg style="left:391px;top:999px;" width="7" height="9" viewBox="0 0 7 9"><path d="M1.500 1L5 4.500 1.500 8" fill="none" stroke="#b5b5b5" stroke-width="2"/></svg>
<div style="left:426px;top:75px;width:745px;height:468px;background:#fff;border:1px solid #b4bacb;box-sizing:border-box;border-radius:8px 8px 6px 6px;"></div>
<div style="left:427px;top:76px;width:743px;height:24px;background:linear-gradient(#e2ebf6,#d2dfee 40%,#cbd9ea);border-radius:7px 7px 0 0;"></div>
<div style="left:427px;top:76px;width:93px;height:26px;background:#fff;border-radius:7px 9px 0 0;border-right:1px solid #b4bacb;box-sizing:border-box;"></div>
<svg style="left:431.3px;top:80px;" width="16" height="16" viewBox="0 0 16 16"><rect x="1.5" y="1.500" width="13" height="10" rx="1.500" fill="#2d62a8"/><rect x="3.300" y="3.300" width="9.400" height="6.400" fill="#fff"/><path d="M4.500 5.500h5M4.500 7.500h6.500" stroke="#4b55a0"/><path d="M3.500 14.500h9" stroke="#2d62a8" stroke-width="1.600"/><path d="M8 11.500v3" stroke="#2d62a8" stroke-width="2"/></svg>
<span class="t" style="left:450.5px;top:80px;letter-spacing:-0.146px;">Console</span>
<svg style="left:502px;top:84px;" width="11" height="11" viewBox="0 0 11 11"><path d="M.600 2.500l1.900-1.900 3 3 3-3 1.900 1.900-3 3 3 3-1.900 1.900-3-3-3 3L.600 8.500l3-3z" fill="#fff" stroke="#474747" stroke-width="1.100" stroke-linejoin="round"/></svg>
<svg style="left:524px;top:80px;" width="16" height="16" viewBox="0 0 16 16"><path d="M.500 1.500h12c1 2-1 4 0 6.500s1 4 0 6.500h-12z" fill="#f1f4fa" stroke="#8896b4"/><path d="M8.500 2v12.500M1 8h12" stroke="#b8c2d8"/><circle cx="4.800" cy="4.800" r="2.500" fill="#e33a3a" stroke="#b52222" stroke-width=".5"/><path d="M4.800 9l2.500 4.500h-5z" fill="#f6a820" stroke="#c47a10" stroke-width=".6" stroke-linejoin="round"/></svg>
<span class="t" style="left:543.5px;top:80px;letter-spacing:-0.148px;">Problems</span>
<svg style="left:888px;top:81px;" width="15" height="15" viewBox="0 0 15 15"><circle cx="7.500" cy="7.500" r="7" fill="#d2d2d2" stroke="#a8a8a8"/><path d="M4.500 4.500l6 6M10.500 4.500l-6 6" stroke="#fff" stroke-width="2.600"/></svg>
<div style="left:909px;top:80px;width:1px;height:17px;background:#a0a0a0;"></div>
<svg style="left:918px;top:80px;" width="16" height="16" viewBox="0 0 16 16"><path d="M1.500 .500h6.500l3 3v9.500h-9.500z" fill="#fbf8ee" stroke="#c4b48a"/><path d="M3.500 4.500h4M3.500 6.500h5.500M3.500 8.500h5.500M3.500 10.500h3" stroke="#5a82c8"/><path d="M9 9.500l5.500 5.500M14.500 9.500L9 15" stroke="#808080" stroke-width="2.200"/></svg>
<svg style="left:941px;top:80px;" width="16" height="16" viewBox="0 0 16 16"><path d="M9.500 1.500h5v13h-5z" fill="#fff" stroke="#7a8fb8"/><path d="M11 4h2M11 6.500h2M11 9h2M11 11.500h2" stroke="#5a78b0"/><rect x="1.500" y="8.500" width="8" height="6" fill="#f0c040" stroke="#a97318"/><path d="M3.500 8.500v-2.500a2 2 0 0 1 4 0v2.500" fill="none" stroke="#a97318" stroke-width="1.300"/></svg>
<svg style="left:965px;top:80px;" width="16" height="16" viewBox="0 0 16 16"><path d="M.500 .500h7l2.500 2.500v10h-9.500z" fill="#fbf8ee" stroke="#c4b48a"/><path d="M2.500 4.500h4M2.500 6.500h5M2.500 8.500h3M2.500 10.500h3" stroke="#5a82c8"/><path d="M13.500 3v6.500h-4V7L5.500 10.500l4 3.500v-2.500h6V3z" fill="#fdf0b8" stroke="#d09a1c" stroke-width=".9" stroke-linejoin="round"/></svg>
<div style="left:986px;top:80px;width:1px;height:17px;background:#a0a0a0;"></div>
<svg style="left:996px;top:80px;" width="16" height="16" viewBox="0 0 16 16"><rect x=".500" y="5.500" width="12" height="9" fill="#fff" stroke="#3a5f9a"/><rect x="1" y="6" width="11" height="2.500" fill="#3f74b8"/><path d="M8 8l4.500-5.500 2.500 2z" fill="#2e9b3a" stroke="#1d6a24" stroke-width=".6"/><path d="M12 1l3.500 3" stroke="#1d6a24" stroke-width="1.600"/></svg>
<svg style="left:1019.5px;top:80px;" width="16" height="16" viewBox="0 0 16 16"><rect x="1.5" y="1.500" width="13" height="10" rx="1.500" fill="#2d62a8"/><rect x="3.300" y="3.300" width="9.400" height="6.400" fill="#fff"/><path d="M4.500 5.500h5M4.500 7.500h6.500" stroke="#4b55a0"/><path d="M3.500 14.500h9" stroke="#2d62a8" stroke-width="1.600"/><path d="M8 11.500v3" stroke="#2d62a8" stroke-width="2"/></svg>
<svg style="left:1042px;top:85px;" width="7" height="4" viewBox="0 0 7 4"><path d="M0 0h7l-3.5 4z" fill="#000"/></svg>
<svg style="left:1057px;top:80px;" width="16" height="16" viewBox="0 0 16 16"><rect x=".500" y="4.500" width="12" height="10" fill="#fff" stroke="#3a5f9a"/><rect x="1" y="5" width="11" height="2.500" fill="#3f74b8"/><path d="M12 0l1 2.300 2.500.3-1.800 1.700.4 2.500-2.100-1.200-2.100 1.200.4-2.500L8.500 2.600l2.500-.3z" fill="#fff3a8" stroke="#c9971c" stroke-width=".8"/></svg>
<svg style="left:1080px;top:85px;" width="7" height="4" viewBox="0 0 7 4"><path d="M0 0h7l-3.5 4z" fill="#000"/></svg>
<svg style="left:1100px;top:83px;" width="11" height="7" viewBox="0 0 11 7"><path d="M.7.700h9.600L5.500 5.800z" fill="#fff" stroke="#6b6b6b" stroke-width="1.100"/></svg>
<svg style="left:1123px;top:83px;" width="10" height="4" viewBox="0 0 10 4"><rect x=".600" y=".600" width="8.800" height="2.800" fill="#fff" stroke="#6b6b6b" stroke-width="1.100"/></svg>
<svg style="left:1146px;top:83px;" width="10" height="10" viewBox="0 0 10 10"><rect x=".600" y=".600" width="8.800" height="8.800" fill="#fff" stroke="#6b6b6b" stroke-width="1.100"/><path d="M.6 2.500h8.800" stroke="#6b6b6b" stroke-width="1.100"/></svg>
<span class="t" style="left:428.7px;top:103px;line-height:17px;letter-spacing:-0.352px;">Trace Console </span>
<span class="t" style="left:505.3px;top:103px;line-height:17px;letter-spacing:0.137px;">e31-dual-core-trace-multicore-hello </span>
<span class="t" style="left:700.7px;top:103px;line-height:17px;letter-spacing:-0.389px;">[11:28:36]</span>
<div style="left:428px;top:118px;width:740px;height:1px;background:#a0a0a0;"></div>
<div style="left:431px;top:120px;width:720px;height:15px;background:#eeeeff;"></div>
<span class="m" style="left:431px;top:122px;line-height:15px;">[019309] [1] Source:   long control_base = __metal_driver_sifive_uart0_control_base(uart);</span>
<div style="left:431px;top:135px;width:720px;height:15px;background:#eeeeff;"></div>
<span class="m" style="left:431px;top:137px;line-height:15px;">[019310] [1]     40402e44:         fef42623           sw        a5,-20(s0)</span>
<div style="left:431px;top:150px;width:720px;height:15px;background:#fffff0;"></div>
<span class="m" style="left:431px;top:152px;line-height:15px;">[019311]</span>
<div style="left:431px;top:165px;width:720px;height:15px;background:#eeeeff;"></div>
<span class="m" style="left:431px;top:167px;line-height:15px;">[019312] [1] File: freedom-metal/src/drivers/sifive_uart0.c:46</span>
<div style="left:431px;top:180px;width:720px;height:15px;background:#eeeeff;"></div>
<span class="m" style="left:431px;top:182px;line-height:15px;">[019313] [1] Source:   return !((UART_REGW(METAL_SIFIVE_UART0_TXDATA) &amp; UART_TXFULL));</span>
<div style="left:431px;top:195px;width:720px;height:15px;background:#eeeeff;"></div>
<span class="m" style="left:431px;top:197px;line-height:15px;">[019314] [1]     40402e48:         fec42783           lw        a5,-20(s0)</span>
<div style="left:431px;top:210px;width:720px;height:15px;background:#eeeeff;"></div>
<span class="m" style="left:431px;top:212px;line-height:15px;">[019315] [1]     40402e4c:         439c               lw        a5,0(a5)</span>
<div style="left:431px;top:225px;width:720px;height:15px;background:#fffff0;"></div>
<span class="m" style="left:431px;top:227px;line-height:15px;">[019316]</span>
<div style="left:431px;top:240px;width:720px;height:15px;background:#eeeeff;"></div>
<span class="m" style="left:431px;top:242px;line-height:15px;">[019317] [1] File: freedom-metal/src/drivers/sifive_uart0.c:46</span>
<div style="left:431px;top:255px;width:720px;height:15px;background:#eeeeff;"></div>
<span class="m" style="left:431px;top:257px;line-height:15px;">[019318] [1] Source:   return !((UART_REGW(METAL_SIFIVE_UART0_TXDATA) &amp; UART_TXFULL));</span>
<div style="left:431px;top:270px;width:720px;height:15px;background:#eeeeff;"></div>
<span class="m" style="left:431px;top:272px;line-height:15px;">[019319] [1]     40402e4e:         fff7c793           not       a5,a5</span>
<div style="left:431px;top:285px;width:720px;height:15px;background:#eeeeff;"></div>
<span class="m" style="left:431px;top:287px;line-height:15px;">[019320] [1]     40402e52:         83fd               srli      a5,a5,0x1f</span>
<div style="left:431px;top:300px;width:720px;height:15px;background:#eeeeff;"></div>
<span class="m" style="left:431px;top:302px;line-height:15px;">[019321] [1]     40402e54:         0ff7f793           andi      a5,a5,255</span>
<div style="left:431px;top:315px;width:720px;height:15px;background:#fffff0;"></div>
<span class="m" style="left:431px;top:317px;line-height:15px;">[019322]</span>
<div style="left:431px;top:330px;width:720px;height:15px;background:#eeeeff;"></div>
<span class="m" style="left:431px;top:332px;line-height:15px;">[019323] [1] File: freedom-metal/src/drivers/sifive_uart0.c:47</span>
<div style="left:431px;top:345px;width:720px;height:15px;background:#eeeeff;"></div>
<span class="m" style="left:431px;top:347px;line-height:15px;">[019324] [1] Source: }</span>
<div style="left:431px;top:360px;width:720px;height:15px;background:#eeeeff;"></div>
<span class="m" style="left:431px;top:362px;line-height:15px;">[019325] [1]     40402e58:         853e               mv        a0,a5</span>
<div style="left:431px;top:375px;width:720px;height:15px;background:#eeeeff;"></div>
<span class="m" style="left:431px;top:377px;line-height:15px;">[019326] [1]     40402e5a:         50b2               lw        ra,44(sp)</span>
<div style="left:431px;top:390px;width:720px;height:15px;background:#eeeeff;"></div>
<span class="m" style="left:431px;top:392px;line-height:15px;">[019327] [1]     40402e5c:         5422               lw        s0,40(sp)</span>
<div style="left:431px;top:405px;width:720px;height:15px;background:#eeeeff;"></div>
<span class="m" style="left:431px;top:407px;line-height:15px;">[019328] [1]     40402e5e:         6145               addi      sp,sp,48</span>
<div style="left:431px;top:420px;width:720px;height:15px;background:#fffff0;"></div>
<span class="m" style="left:431px;top:422px;line-height:15px;">[019329]</span>
<div style="left:431px;top:435px;width:720px;height:15px;background:#eeeeff;"></div>
<span class="m" style="left:431px;top:437px;line-height:15px;">[019330] [0] File: src/multicore-hello.c:50</span>
<div style="left:431px;top:450px;width:720px;height:15px;background:#eeeeff;"></div>
<span class="m" style="left:431px;top:452px;line-height:15px;">[019331] [0] Source:    int num_harts = metal_cpu_get_num_harts();</span>
<div style="left:431px;top:465px;width:720px;height:15px;background:#eeeeff;"></div>
<span class="m" style="left:431px;top:467px;line-height:15px;">[019332] [0]     40400306:         fea42623           sw        a0,-20(s0)</span>
<div style="left:431px;top:480px;width:720px;height:15px;background:#eeeeff;"></div>
<span class="m" style="left:431px;top:482px;line-height:15px;">[019333] Info: End of trace file</span>
<div style="left:431px;top:495px;width:720px;height:15px;background:#fffff0;"></div>
<div style="left:1151px;top:120px;width:17px;height:419px;background:#f0f0f0;"></div>
<div style="left:428px;top:524px;width:724px;height:15px;background:#f0f0f0;"></div>
<svg style="left:1155px;top:126px;" width="9" height="7" viewBox="0 0 9 7"><path d="M1 5.500l3.500-3.500L8 5.500" fill="none" stroke="#606060" stroke-width="2"/></svg>
<svg style="left:1155px;top:511px;" width="9" height="7" viewBox="0 0 9 7"><path d="M1 1.500l3.500 3.500L8 1.500" fill="none" stroke="#606060" stroke-width="2"/></svg>
<div style="left:1152px;top:489px;width:15px;height:17px;background:#cdcdcd;"></div>
<svg style="left:434px;top:527px;" width="7" height="9" viewBox="0 0 7 9"><path d="M5.500 1L2 4.500 5.500 8" fill="none" stroke="#606060" stroke-width="2"/></svg>
<svg style="left:1140px;top:527px;" width="7" height="9" viewBox="0 0 7 9"><path d="M1.500 1L5 4.500 1.500 8" fill="none" stroke="#606060" stroke-width="2"/></svg>
<div style="left:446px;top:525px;width:570px;height:14px;background:#cdcdcd;"></div>
<svg style="left:779px;top:474px;" width="9" height="16" viewBox="0 0 9 16"><path d="M1 .500h2.500M5.500 .500H8M4.500 1v14M1 15.500h2.500M5.500 15.500H8" stroke="#222" stroke-width="1"/></svg>
<div style="left:1175px;top:75px;width:743px;height:468px;background:#fff;border-radius:8px 8px 4px 4px;"></div>
<div style="left:1175px;top:75px;width:743px;height:26px;background:#f5f6fb;border-radius:8px 8px 0 0;"></div>
<div style="left:1175px;top:75px;width:86px;height:26px;background:linear-gradient(#d9e3ee,#e9eff6 45%,#fff 92%);border-radius:8px 10px 0 0;"></div>
<svg style="left:1181px;top:80px;" width="15" height="15" viewBox="0 0 16 16"><ellipse cx="8" cy="9" rx="3.3" ry="4.5" fill="#7fae8b" stroke="#2f6a4f"/><circle cx="8" cy="4" r="1.8" fill="#2f6a4f"/><path d="M5 7L1.5 4.5M5 9.5H1M5 12l-3 2.5M11 7l3.5-2.5M11 9.5h4M11 12l3 2.5M6.5 2.5L5 .5M9.500 2.5L11 .5" stroke="#2f6a4f" stroke-width="1.1" fill="none"/><ellipse cx="7.3" cy="8.3" rx="1.2" ry="2" fill="#cfe6c8"/></svg>
<span class="t" style="left:1200.4px;top:80px;letter-spacing:-0.372px;">Debug</span>
<svg style="left:1242px;top:84px;" width="11" height="11" viewBox="0 0 11 11"><path d="M.600 2.500l1.900-1.900 3 3 3-3 1.900 1.900-3 3 3 3-1.900 1.900-3-3-3 3L.600 8.500l3-3z" fill="#fff" stroke="#474747" stroke-width="1.100" stroke-linejoin="round"/></svg>
<svg style="left:1267px;top:80px;" width="16" height="16" viewBox="0 0 16 16"><rect x=".500" y="1.500" width="12" height="10" rx="1" fill="#dfe3ea" stroke="#a8afbf"/><rect x="2.500" y="3.500" width="8" height="6" fill="#fff"/><path d="M3 14h7" stroke="#a8afbf" stroke-width="1.500"/><ellipse cx="11" cy="11" rx="2.600" ry="3.300" fill="#b9d3bf" stroke="#7fa88b"/><path d="M7.500 8l2 1.500M7.500 11h1.500M7.500 14l2-1.500M14.500 8l-2 1.500M14.500 11H13M14.500 14l-2-1.500" stroke="#7fa88b" stroke-width=".8"/></svg>
<span class="t" style="left:1285.3px;top:80px;color:#8a93a8;letter-spacing:-0.191px;">Debugger Console</span>
<svg style="left:1394px;top:82px;" width="14" height="12" viewBox="0 0 14 12"><circle cx="4" cy="4" r="3" fill="#b9c7da" stroke="#9aa8c0"/><circle cx="10.500" cy="8.500" r="3" fill="#9fc0dd" stroke="#86a6c6"/></svg>
<span class="t" style="left:1413px;top:80px;color:#8a93a8;letter-spacing:-0.188px;">Breakpoints</span>
<svg style="left:1790px;top:80px;" width="16" height="16" viewBox="0 0 16 16"><path d="M2 1l4 4 4-4 2 2-4 4 4 4-2 2-4-4-4 4-2-2 4-4-4-4z" fill="#dcdcdc" stroke="#c4c4c4" stroke-width=".6"/><path d="M6 5l3.500 3.500L13 5l2 2-3.500 3.500L15 14l-2 2-3.500-3.500L6 16l-2-2 3.500-3.500L4 7z" fill="#a4a4a4"/></svg>
<div style="left:1811px;top:80px;width:1px;height:17px;background:#a0a0a0;"></div>
<svg style="left:1820px;top:80px;" width="16" height="16" viewBox="0 0 16 16"><text x="-.500" y="13.500" font-family="Liberation Serif" font-size="17" font-weight="bold" fill="#000080">i</text><path d="M5.500 6.500h5V4L15 8l-4.500 4V9.500h-5z" fill="#e4d030" stroke="#7a6a00" stroke-width=".9" stroke-linejoin="round"/></svg>
<svg style="left:1848px;top:83px;" width="11" height="7" viewBox="0 0 11 7"><path d="M.7.700h9.600L5.500 5.800z" fill="#fff" stroke="#6b6b6b" stroke-width="1.100"/></svg>
<svg style="left:1872px;top:83px;" width="10" height="4" viewBox="0 0 10 4"><rect x=".600" y=".600" width="8.800" height="2.800" fill="#fff" stroke="#6b6b6b" stroke-width="1.100"/></svg>
<svg style="left:1895px;top:83px;" width="10" height="10" viewBox="0 0 10 10"><rect x=".600" y=".600" width="8.800" height="8.800" fill="#fff" stroke="#6b6b6b" stroke-width="1.100"/><path d="M.6 2.500h8.800" stroke="#6b6b6b" stroke-width="1.100"/></svg>
<svg style="left:1183px;top:110px;" width="10" height="6" viewBox="0 0 10 6"><path d="M1 1l3.800 3.800L8.600 1" fill="none" stroke="#404040" stroke-width="1.700"/></svg>
<svg style="left:1198px;top:104px;" width="16" height="16" viewBox="0 0 16 16"><rect x=".500" y="1.500" width="14" height="13" fill="#f7faff" stroke="#8f8660" stroke-width="1"/><rect x="1" y="2" width="13" height="2.500" fill="#78a4e4"/><text x="4" y="12.800" font-family="Liberation Sans" font-size="10" font-weight="bold" fill="#1f4f9a">c</text></svg>
<span class="t" style="left:1218px;top:103px;letter-spacing:0.156px;">e31-dual-core-trace-multicore-hello </span>
<span class="t" style="left:1413.7px;top:103px;letter-spacing:-0.273px;">[SiFive GDB OpenOCD Debugging]</span>
<svg style="left:1199px;top:128px;" width="10" height="6" viewBox="0 0 10 6"><path d="M1 1l3.800 3.800L8.600 1" fill="none" stroke="#404040" stroke-width="1.700"/></svg>
<svg style="left:1214px;top:122px;" width="16" height="16" viewBox="0 0 16 16"><rect x=".500" y="6.500" width="4" height="8" fill="#f5d98a" stroke="#b58a3a"/><rect x="4.500" y="9.500" width="4" height="5" fill="#f5d98a" stroke="#b58a3a"/><circle cx="10" cy="5" r="3.800" fill="#f7d36a" stroke="#c98a1b"/><circle cx="10" cy="5" r="1.300" fill="#fff" stroke="#c98a1b" stroke-width=".6"/><path d="M8 12l3 2.500L8 16" fill="none" stroke="#4a6fc0" stroke-width="1.200"/></svg>
<span class="t" style="left:1234.5px;top:121px;letter-spacing:0.156px;">multicore-hello.elf</span>
<svg style="left:1215px;top:146px;" width="10" height="6" viewBox="0 0 10 6"><path d="M1 1l3.800 3.800L8.600 1" fill="none" stroke="#404040" stroke-width="1.700"/></svg>
<svg style="left:1230px;top:140px;" width="16" height="16" viewBox="0 0 16 16"><rect x=".500" y="6.500" width="4" height="8" fill="#f5d98a" stroke="#b58a3a"/><rect x="4.500" y="9.500" width="4" height="5" fill="#f5d98a" stroke="#b58a3a"/><circle cx="10.500" cy="5" r="3.600" fill="#f0c050" stroke="#8a5a10" stroke-width="1.200"/><circle cx="10.500" cy="5" r="1.200" fill="#fff"/><path d="M10.500 .500v2M10.500 7.500v2M6 5h2M13 5h2M7.300 1.800l1.400 1.400M12.300 6.800l1.400 1.400M13.700 1.800l-1.400 1.400M8.700 6.800L7.300 8.200" stroke="#8a5a10" stroke-width="1"/></svg>
<span class="t" style="left:1250.5px;top:139px;letter-spacing:-0.325px;">Thread #1 1 (Name: Hart 0, RV32) (Suspended : Step)</span>
<div style="left:1243px;top:157px;width:247px;height:18px;background:#e2e2e2;"></div>
<svg style="left:1247px;top:161px;" width="12" height="11" viewBox="0 0 12 11"><path d="M0 1h12M0 4h12M0 7h12M0 10h12" stroke="#2f6fb5" stroke-width="1.700"/></svg>
<span class="t" style="left:1266px;top:157px;letter-spacing:-0.120px;">main() at multicore-hello.c:52 0x4040030a</span>
<svg style="left:1215px;top:182px;" width="10" height="6" viewBox="0 0 10 6"><path d="M1 1l3.800 3.800L8.600 1" fill="none" stroke="#404040" stroke-width="1.700"/></svg>
<svg style="left:1230px;top:176px;" width="16" height="16" viewBox="0 0 16 16"><rect x=".500" y="6.500" width="4" height="8" fill="#f5d98a" stroke="#b58a3a"/><rect x="4.500" y="9.500" width="4" height="5" fill="#f5d98a" stroke="#b58a3a"/><circle cx="10.500" cy="5" r="3.600" fill="#f0c050" stroke="#8a5a10" stroke-width="1.200"/><circle cx="10.500" cy="5" r="1.200" fill="#fff"/><path d="M10.500 .500v2M10.500 7.500v2M6 5h2M13 5h2M7.300 1.800l1.400 1.400M12.300 6.800l1.400 1.400M13.700 1.800l-1.400 1.400M8.700 6.800L7.300 8.200" stroke="#8a5a10" stroke-width="1"/></svg>
<span class="t" style="left:1250.5px;top:175px;letter-spacing:-0.263px;">Thread #2 2 (Name: Hart 1, RV32) (Suspended : Container)</span>
<svg style="left:1247px;top:197px;" width="12" height="11" viewBox="0 0 12 11"><path d="M0 1h12M0 4h12M0 7h12M0 10h12" stroke="#2f6fb5" stroke-width="1.700"/></svg>
<span class="t" style="left:1266px;top:193px;letter-spacing:-0.317px;">__metal_driver_sifive_uart0_txready() at sifive_uart0.c:47 0x40402e60</span>
<svg style="left:1247px;top:215px;" width="12" height="11" viewBox="0 0 12 11"><path d="M0 1h12M0 4h12M0 7h12M0 10h12" stroke="#2f6fb5" stroke-width="1.700"/></svg>
<span class="t" style="left:1266px;top:211px;letter-spacing:-0.303px;">__metal_driver_sifive_uart0_putc() at sifive_uart0.c:54 0x40402e86</span>
<svg style="left:1247px;top:233px;" width="12" height="11" viewBox="0 0 12 11"><path d="M0 1h12M0 4h12M0 7h12M0 10h12" stroke="#2f6fb5" stroke-width="1.700"/></svg>
<span class="t" style="left:1266px;top:229px;letter-spacing:-0.209px;">metal_uart_putc() at uart.h:52 0x404032b4</span>
<svg style="left:1247px;top:251px;" width="12" height="11" viewBox="0 0 12 11"><path d="M0 1h12M0 4h12M0 7h12M0 10h12" stroke="#2f6fb5" stroke-width="1.700"/></svg>
<span class="t" style="left:1266px;top:247px;letter-spacing:-0.176px;">metal_tty_putc_raw() at tty.c:21 0x404036fe</span>
<svg style="left:1247px;top:269px;" width="12" height="11" viewBox="0 0 12 11"><path d="M0 1h12M0 4h12M0 7h12M0 10h12" stroke="#2f6fb5" stroke-width="1.700"/></svg>
<span class="t" style="left:1266px;top:265px;letter-spacing:-0.151px;">metal_tty_putc() at tty.c:16 0x404036d6</span>
<svg style="left:1247px;top:287px;" width="12" height="11" viewBox="0 0 12 11"><path d="M0 1h12M0 4h12M0 7h12M0 10h12" stroke="#2f6fb5" stroke-width="1.700"/></svg>
<span class="t" style="left:1266px;top:283px;letter-spacing:-0.354px;">_write() at sys_write.c:17 0x40403460</span>
<svg style="left:1247px;top:305px;" width="12" height="11" viewBox="0 0 12 11"><path d="M0 1h12M0 4h12M0 7h12M0 10h12" stroke="#2f6fb5" stroke-width="1.700"/></svg>
<span class="t" style="left:1266px;top:301px;letter-spacing:-0.344px;">_write_r() at 0x40400cc6</span>
<svg style="left:1214px;top:320px;" width="16" height="16" viewBox="0 0 16 16"><rect x="6.500" y=".500" width="7" height="12" fill="#e6e6e6" stroke="#9a9a9a"/><path d="M8 3h4M8 5.500h4M8 8h4" stroke="#9a9a9a"/><path d="M.500 9.500l6 3.200-6 3.200z" fill="#36a443" stroke="#1d7a2a" stroke-width=".6"/></svg>
<span class="t" style="left:1234.5px;top:319px;letter-spacing:-0.111px;">openocd.exe</span>
<svg style="left:1214px;top:338px;" width="16" height="16" viewBox="0 0 16 16"><rect x="6.500" y=".500" width="7" height="12" fill="#e6e6e6" stroke="#9a9a9a"/><path d="M8 3h4M8 5.500h4M8 8h4" stroke="#9a9a9a"/><path d="M.500 9.500l6 3.200-6 3.200z" fill="#36a443" stroke="#1d7a2a" stroke-width=".6"/></svg>
<span class="t" style="left:1234.5px;top:337px;letter-spacing:0.070px;">riscv64-unknown-elf-gdb.exe</span>
<div style="left:426px;top:547px;width:883px;height:466px;background:#fff;border-radius:8px 8px 4px 4px;"></div>
<div style="left:426px;top:547px;width:883px;height:26px;background:#f5f6fb;border-radius:8px 8px 0 0;"></div>
<div style="left:426px;top:547px;width:140px;height:26px;background:linear-gradient(#d9e3ee,#e9eff6 45%,#fff 92%);border-radius:8px 10px 0 0;"></div>
<svg style="left:434px;top:553px;" width="12" height="14" viewBox="0 0 12 14"><path d="M1.500 .500h6.500l3 3v10h-9.500z" fill="#fff" stroke="#b58a3a"/><text x="1.300" y="11.500" font-family="Liberation Sans" font-size="10" font-weight="bold" fill="#2a5a9a" letter-spacing="-.6">.c</text></svg>
<span class="t" style="left:450.7px;top:552px;letter-spacing:0.173px;">multicore-hello.c</span>
<svg style="left:549px;top:556px;" width="11" height="11" viewBox="0 0 11 11"><path d="M.600 2.500l1.900-1.900 3 3 3-3 1.900 1.900-3 3 3 3-1.900 1.900-3-3-3 3L.600 8.500l3-3z" fill="#fff" stroke="#474747" stroke-width="1.100" stroke-linejoin="round"/></svg>
<svg style="left:572px;top:553px;" width="15" height="14" viewBox="0 0 15 14"><rect x=".700" y=".700" width="13.600" height="12.600" fill="#f3f6fb" stroke="#c9b48a" stroke-width="1.100"/><rect x="1" y="1" width="13" height="2.500" fill="#b9cbe8"/><text x="4.200" y="11.500" font-family="Liberation Sans" font-size="9" font-weight="bold" fill="#8aa6d6">c</text></svg>
<span class="t" style="left:591px;top:552px;color:#8a93a8;letter-spacing:-0.099px;">(gdb[6].proc[42000].threa...</span>
<svg style="left:769px;top:553px;" width="12" height="14" viewBox="0 0 12 14"><path d="M1.500 .500h6.500l3 3v10h-9.500z" fill="#fff" stroke="#d4c39c"/><text x="1.300" y="11.500" font-family="Liberation Sans" font-size="10" font-weight="bold" fill="#8aa2c8" letter-spacing="-.6">.c</text></svg>
<span class="t" style="left:786.3px;top:552px;color:#8a93a8;letter-spacing:-0.236px;">sifive_uart0.c</span>
<svg style="left:886px;top:553px;" width="12" height="14" viewBox="0 0 12 14"><path d="M1.500 .500h6.500l3 3v10h-9.500z" fill="#fff" stroke="#d4c39c"/><text x="1.300" y="11.500" font-family="Liberation Sans" font-size="10" font-weight="bold" fill="#8aa2c8" letter-spacing="-.6">.c</text></svg>
<span class="t" style="left:903px;top:552px;color:#8a93a8;">cpu.c</span>
<svg style="left:964px;top:553px;" width="12" height="14" viewBox="0 0 12 14"><path d="M1.500 .500h6.500l3 3v10h-9.500z" fill="#fff" stroke="#d4c39c"/><text x="1.300" y="11.500" font-family="Liberation Sans" font-size="10" font-weight="bold" fill="#8aa2c8" letter-spacing="-.6">.h</text></svg>
<span class="t" style="left:981px;top:552px;color:#8a93a8;letter-spacing:0.076px;">lock.h</span>
<svg style="left:1149px;top:553px;" width="12" height="14" viewBox="0 0 12 14"><path d="M1.500 .500h6.500l3 3v10h-9.500z" fill="#fff" stroke="#d4c39c"/><text x="1.300" y="11.500" font-family="Liberation Sans" font-size="10" font-weight="bold" fill="#8aa2c8" letter-spacing="-.6">.h</text></svg>
<span class="t" style="left:1166.4px;top:552px;color:#8a93a8;letter-spacing:0.026px;">machine.h</span>
<svg style="left:1261px;top:555px;" width="10" height="4" viewBox="0 0 10 4"><rect x=".600" y=".600" width="8.800" height="2.800" fill="#fff" stroke="#6b6b6b" stroke-width="1.100"/></svg>
<svg style="left:1284px;top:555px;" width="10" height="10" viewBox="0 0 10 10"><rect x=".600" y=".600" width="8.800" height="8.800" fill="#fff" stroke="#6b6b6b" stroke-width="1.100"/><path d="M.6 2.500h8.800" stroke="#6b6b6b" stroke-width="1.100"/></svg>
<div style="left:429px;top:575px;width:12px;height:420px;background:#f6f6f6;"></div>
<div style="left:458px;top:575px;width:1px;height:420px;background:#ececec;"></div>
<div style="left:429px;top:710px;width:12px;height:240px;background:#1f86e0;background-image:repeating-linear-gradient(90deg,rgba(255,255,255,.38) 0 1px,transparent 1px 2px),repeating-linear-gradient(0deg,rgba(255,255,255,.38) 0 1px,transparent 1px 2px);border-top:1px solid #1878d0;border-bottom:1px solid #1878d0;box-sizing:border-box;"></div>
<div style="left:461px;top:755px;width:815px;height:15px;background:#e8f2fe;"></div>
<div style="left:461px;top:755px;width:210px;height:15px;background:#c6dbae;"></div>
<svg style="left:428px;top:758px;" width="8" height="9" viewBox="0 0 8 9"><path d="M.500 2.500h3V.500L7.500 4.500 3.500 8.500V6.500h-3z" fill="#9db8dc" stroke="#3a6aa8" stroke-width=".9"/></svg>
<span class="m" style="left:461px;top:592px;line-height:15px;">        _start_other = 1;</span>
<span class="m" style="left:461px;top:622px;line-height:15px;">        <span class="k">return</span> main();</span>
<span class="m" style="left:461px;top:637px;line-height:15px;">    } <span class="k">else</span> {</span>
<span class="m" style="left:461px;top:652px;line-height:15px;">        <span class="k">return</span> other_main(hartid);</span>
<span class="m" style="left:461px;top:667px;line-height:15px;">    }</span>
<span class="m" style="left:461px;top:682px;line-height:15px;">}</span>
<span class="m" style="left:461px;top:712px;line-height:15px;"><span class="k">int</span> <span class="b">main</span>(<span class="k">void</span>) {</span>
<span class="m" style="left:461px;top:727px;line-height:15px;">    <span class="k">int</span> num_harts = metal_cpu_get_num_harts();</span>
<span class="m" style="left:461px;top:757px;line-height:15px;">    metal_lock_take(&amp;my_lock);</span>
<span class="m" style="left:461px;top:787px;line-height:15px;">    <span class="f">puts</span>(<span class="s">"Hart 0\n"</span>);</span>
<span class="m" style="left:461px;top:802px;line-height:15px;">    <span class="f">fflush</span>(stdout);</span>
<span class="m" style="left:461px;top:832px;line-height:15px;">    checkin_count += 1;</span>
<span class="m" style="left:461px;top:862px;line-height:15px;">    metal_lock_give(&amp;my_lock);</span>
<span class="m" style="left:461px;top:892px;line-height:15px;">    <span class="k">while</span>(checkin_count != num_harts) ;</span>
<span class="m" style="left:461px;top:922px;line-height:15px;">    <span class="k">return</span> 0;</span>
<span class="m" style="left:461px;top:937px;line-height:15px;">}</span>
<span class="m" style="left:461px;top:967px;line-height:15px;"><span class="k">int</span> <span class="b">other_main</span>(<span class="k">int</span> hartid) {</span>
<div style="left:459px;top:980px;width:800px;height:14px;overflow:hidden"><span class="m" style="left:2px;top:2px">    <span class="k">while</span>(! start other) ;</span></div>
<svg style="left:449px;top:713px;" width="9" height="9" viewBox="0 0 9 9"><circle cx="4.500" cy="4.500" r="4" fill="#e4e9f0" stroke="#a9b3c2" stroke-width=".9"/><path d="M2.200 4.500h4.600" stroke="#39414f" stroke-width="1.200"/></svg>
<svg style="left:449px;top:968px;" width="9" height="9" viewBox="0 0 9 9"><circle cx="4.500" cy="4.500" r="4" fill="#e4e9f0" stroke="#a9b3c2" stroke-width=".9"/><path d="M2.200 4.500h4.600" stroke="#39414f" stroke-width="1.200"/></svg>
<div style="left:1293px;top:575px;width:13px;height:436px;background:#f8f8f8;"></div>
<div style="left:1277px;top:575px;width:16px;height:420px;background:#f0f0f0;"></div>
<svg style="left:1280px;top:580px;" width="9" height="7" viewBox="0 0 9 7"><path d="M1 5.500l3.500-3.500L8 5.500" fill="none" stroke="#606060" stroke-width="2"/></svg>
<svg style="left:1280px;top:982px;" width="9" height="7" viewBox="0 0 9 7"><path d="M1 1.500l3.500 3.500L8 1.500" fill="none" stroke="#606060" stroke-width="2"/></svg>
<div style="left:1277px;top:775px;width:15px;height:131px;background:#cdcdcd;"></div>
<div style="left:459px;top:995px;width:834px;height:16px;background:#f0f0f0;"></div>
<svg style="left:464px;top:998px;" width="7" height="9" viewBox="0 0 7 9"><path d="M5.500 1L2 4.500 5.500 8" fill="none" stroke="#b5b5b5" stroke-width="2"/></svg>
<svg style="left:1264px;top:998px;" width="7" height="9" viewBox="0 0 7 9"><path d="M1.500 1L5 4.500 1.500 8" fill="none" stroke="#b5b5b5" stroke-width="2"/></svg>
<svg style="left:1295px;top:832px;" width="8" height="5" viewBox="0 0 8 5"><rect x=".500" y=".500" width="7" height="4" fill="#fff" stroke="#a9cf8a"/></svg>
<div style="left:1313px;top:547px;width:605px;height:466px;background:#fff;border-radius:8px 8px 4px 4px;"></div>
<div style="left:1313px;top:547px;width:605px;height:26px;background:#f5f6fb;border-radius:8px 8px 0 0;"></div>
<div style="left:1551px;top:547px;width:121px;height:26px;background:linear-gradient(#d9e3ee,#e9eff6 45%,#fff 92%);border-radius:8px 10px 0 0;"></div>
<svg style="left:1318px;top:553px;" width="15" height="17" viewBox="0 0 15 17"><rect x="1.500" y="1.500" width="5" height="5" fill="#d5e6f8" stroke="#7faad8"/><rect x="1.500" y="10.500" width="5" height="5" fill="#d5e6f8" stroke="#7faad8"/><path d="M8 4.500h5M8 13.500h5" stroke="#8fb2dc" stroke-width="1"/><rect x="8.500" y="7.500" width="2" height="2" fill="#fff" stroke="#7faad8" stroke-width=".8"/></svg>
<span class="t" style="left:1337.4px;top:552px;color:#8a93a8;letter-spacing:0.111px;">Outline</span>
<svg style="left:1386px;top:554px;" width="16" height="12" viewBox="0 0 16 12"><path d="M0 2h3M4 2h3M8 2h3M12 2h1.500M14.500 1v3M0 6h3M4 6h3M8 6h3M0 10h13" stroke="#8a9ac8" stroke-width="1.600"/></svg>
<span class="t" style="left:1406.4px;top:552px;color:#8a93a8;letter-spacing:-0.310px;">Disassembly</span>
<svg style="left:1481px;top:552px;" width="16" height="16" viewBox="0 0 16 16"><rect x="4.500" y=".500" width="10" height="8" rx="1" fill="#7f9fd0" stroke="#5a78b0"/><rect x="6" y="2" width="7" height="4.500" fill="#e9f0fb"/><path d="M1 14.500c2-5 6-2 8-6" stroke="#8a8a8a" stroke-width="1.600" fill="none"/><rect x="0" y="11" width="5" height="4.500" rx="1" fill="#c9c9c9" stroke="#9a9a9a" stroke-width=".7"/></svg>
<span class="t" style="left:1501px;top:552px;color:#8a93a8;letter-spacing:-0.131px;">Terminal</span>
<svg style="left:1556px;top:552px;" width="15" height="15" viewBox="0 0 16 16"><path d="M3.200 1.300h9.200l3 7.600-7.700 5.600L.600 8.900z" fill="#fff" stroke="#262626" stroke-width="1.400" stroke-linejoin="round"/><path d="M5.800 5h7.300" stroke="#262626" stroke-width="1.300"/><path d="M1.600 8.900h9.200L7.800 10.600 5.500 9.200" stroke="#262626" stroke-width="1.300" fill="none"/></svg>
<span class="t" style="left:1574.4px;top:552px;letter-spacing:-0.203px;">Trace Control</span>
<svg style="left:1651px;top:556px;" width="11" height="11" viewBox="0 0 11 11"><path d="M.600 2.500l1.900-1.900 3 3 3-3 1.900 1.900-3 3 3 3-1.900 1.900-3-3-3 3L.600 8.500l3-3z" fill="#fff" stroke="#474747" stroke-width="1.100" stroke-linejoin="round"/></svg>
<svg style="left:1871px;top:555px;" width="10" height="4" viewBox="0 0 10 4"><rect x=".600" y=".600" width="8.800" height="2.800" fill="#fff" stroke="#6b6b6b" stroke-width="1.100"/></svg>
<svg style="left:1894px;top:555px;" width="10" height="10" viewBox="0 0 10 10"><rect x=".600" y=".600" width="8.800" height="8.800" fill="#fff" stroke="#6b6b6b" stroke-width="1.100"/><path d="M.6 2.500h8.800" stroke="#6b6b6b" stroke-width="1.100"/></svg>
<div style="left:1316px;top:575px;width:600px;height:437px;background:#f0f0f0;border:1px solid #fff;border-top-color:#a0a0a0;border-left-color:#a0a0a0;box-sizing:border-box;"></div>
<div style="left:1317px;top:576px;width:580px;height:416px;overflow:hidden">
<div style="left:9px;top:10.0px;width:13px;height:13px;background:#fff;border:1px solid #333;box-sizing:border-box;"></div>
<svg style="left:11px;top:12.5px;" width="10" height="9" viewBox="0 0 10 9"><path d="M.700 4.500l3 3L8.700 1" fill="none" stroke="#222" stroke-width="1.200"/></svg>
<span class="t" style="left:25.200000000000045px;top:8px;letter-spacing:-0.158px;">Enable tracing</span>
<div style="left:10px;top:30px;width:575px;height:22px;background:#e1e1e1;border:1px solid #adadad;box-sizing:border-box;"></div>
<span class="t" style="left:251.04999999999995px;top:33px;letter-spacing:-0.259px;">Clear Trace Buffer</span>
<div style="left:10px;top:59px;width:575px;height:22px;background:#e1e1e1;border:1px solid #adadad;box-sizing:border-box;"></div>
<span class="t" style="left:263.79999999999995px;top:62px;letter-spacing:-0.233px;">Collect Trace</span>
<div style="left:9px;top:87px;width:572px;height:1px;background:#a0a0a0;"></div>
<div style="left:9px;top:88px;width:572px;height:1px;background:#fff;"></div>
<div style="left:9px;top:94.0px;width:13px;height:13px;background:#fff;border:1px solid #333;box-sizing:border-box;"></div>
<svg style="left:11px;top:96.5px;" width="10" height="9" viewBox="0 0 10 9"><path d="M.700 4.500l3 3L8.700 1" fill="none" stroke="#222" stroke-width="1.200"/></svg>
<span class="t" style="left:25.200000000000045px;top:92px;letter-spacing:0.072px;">Collect on halt/step</span>
<div style="left:9px;top:114.0px;width:13px;height:13px;background:#fff;border:1px solid #333;box-sizing:border-box;"></div>
<span class="t" style="left:25.200000000000045px;top:112px;letter-spacing:-0.067px;">Clear console on collect</span>
<div style="left:9px;top:133px;width:572px;height:1px;background:#a0a0a0;"></div>
<div style="left:9px;top:134px;width:572px;height:1px;background:#fff;"></div>
<div style="left:9px;top:140.0px;width:13px;height:13px;background:#fff;border:1px solid #333;box-sizing:border-box;"></div>
<svg style="left:11px;top:142.5px;" width="10" height="9" viewBox="0 0 10 9"><path d="M.700 4.500l3 3L8.700 1" fill="none" stroke="#222" stroke-width="1.200"/></svg>
<span class="t" style="left:25.200000000000045px;top:138px;letter-spacing:-0.199px;">Show source lines</span>
<div style="left:9px;top:160.0px;width:13px;height:13px;background:#fff;border:1px solid #333;box-sizing:border-box;"></div>
<svg style="left:11px;top:162.5px;" width="10" height="9" viewBox="0 0 10 9"><path d="M.700 4.500l3 3L8.700 1" fill="none" stroke="#222" stroke-width="1.200"/></svg>
<span class="t" style="left:25.200000000000045px;top:158px;letter-spacing:0.011px;">Show file:line info</span>
<div style="left:9px;top:180.0px;width:13px;height:13px;background:#fff;border:1px solid #333;box-sizing:border-box;"></div>
<svg style="left:11px;top:182.5px;" width="10" height="9" viewBox="0 0 10 9"><path d="M.700 4.500l3 3L8.700 1" fill="none" stroke="#222" stroke-width="1.200"/></svg>
<span class="t" style="left:25.200000000000045px;top:178px;letter-spacing:-0.020px;">Only when they change</span>
<div style="left:9px;top:199px;width:572px;height:1px;background:#a0a0a0;"></div>
<div style="left:9px;top:200px;width:572px;height:1px;background:#fff;"></div>
<div style="left:9px;top:206.0px;width:13px;height:13px;background:#fff;border:1px solid #333;box-sizing:border-box;"></div>
<span class="t" style="left:25.200000000000045px;top:204px;letter-spacing:-0.025px;">Show full paths</span>
<div style="left:9px;top:226.0px;width:13px;height:13px;background:#fff;border:1px solid #333;box-sizing:border-box;"></div>
<svg style="left:11px;top:228.5px;" width="10" height="9" viewBox="0 0 10 9"><path d="M.700 4.500l3 3L8.700 1" fill="none" stroke="#222" stroke-width="1.200"/></svg>
<span class="t" style="left:25.200000000000045px;top:224px;letter-spacing:-0.062px;">Show line numbers</span>
<div style="left:9px;top:245px;width:572px;height:1px;background:#a0a0a0;"></div>
<div style="left:9px;top:246px;width:572px;height:1px;background:#fff;"></div>
<div style="left:10px;top:252px;width:575px;height:22px;background:#e1e1e1;border:1px solid #adadad;box-sizing:border-box;"></div>
<span class="t" style="left:252.04999999999995px;top:255px;letter-spacing:-0.149px;">Setup Step Mode</span>
<div style="left:9px;top:280px;width:572px;height:1px;background:#a0a0a0;"></div>
<div style="left:9px;top:281px;width:572px;height:1px;background:#fff;"></div>
<span class="t" style="left:17px;top:297px;letter-spacing:-0.100px;">Instruction Trace</span>
<div style="left:112px;top:294px;width:85px;height:23px;background:#e1e1e1;border:1px solid #adadad;box-sizing:border-box;"></div>
<span class="t" style="left:116.5px;top:297px;letter-spacing:-0.504px;">On</span>
<svg style="left:183px;top:303px;" width="9" height="6" viewBox="0 0 9 6"><path d="M.500 .500l4 4 4-4" fill="none" stroke="#444" stroke-width="1.100"/></svg>
<span class="t" style="left:17px;top:340px;letter-spacing:-0.144px;">Instrumented Trace Component (ITC)</span>
<div style="left:220px;top:337px;width:264px;height:23px;background:#e1e1e1;border:1px solid #adadad;box-sizing:border-box;"></div>
<span class="t" style="left:224.5px;top:340px;letter-spacing:0.071px;">Off</span>
<svg style="left:470px;top:346px;" width="9" height="6" viewBox="0 0 9 6"><path d="M.500 .500l4 4 4-4" fill="none" stroke="#444" stroke-width="1.100"/></svg>
<div style="left:9px;top:373.0px;width:13px;height:13px;background:#fff;border:1px solid #333;box-sizing:border-box;"></div>
<svg style="left:11px;top:375.5px;" width="10" height="9" viewBox="0 0 10 9"><path d="M.700 4.500l3 3L8.700 1" fill="none" stroke="#222" stroke-width="1.200"/></svg>
<span class="t" style="left:25.200000000000045px;top:371px;letter-spacing:-0.014px;">Stop trace when buffer fills</span>
<span class="t" style="left:17px;top:402.5px;letter-spacing:-0.335px;">Max BTMs between SYNC msgs</span>
<div style="left:191px;top:400px;width:59px;height:23px;background:#e1e1e1;border:1px solid #adadad;box-sizing:border-box;"></div>
<span class="t" style="left:195.5px;top:403px;letter-spacing:-0.673px;">256</span>
<svg style="left:236px;top:409px;" width="9" height="6" viewBox="0 0 9 6"><path d="M.500 .500l4 4 4-4" fill="none" stroke="#444" stroke-width="1.100"/></svg>
</div>
<div style="left:1897px;top:576px;width:17px;height:416px;background:#f0f0f0;"></div>
<svg style="left:1901px;top:582px;" width="9" height="7" viewBox="0 0 9 7"><path d="M1 5.500l3.500-3.500L8 5.500" fill="none" stroke="#606060" stroke-width="2"/></svg>
<svg style="left:1901px;top:980px;" width="9" height="7" viewBox="0 0 9 7"><path d="M1 1.500l3.500 3.500L8 1.500" fill="none" stroke="#606060" stroke-width="2"/></svg>
<div style="left:1898px;top:594px;width:15px;height:221px;background:#cdcdcd;"></div>
<div style="left:1317px;top:992px;width:580px;height:19px;background:#f0f0f0;"></div>
<svg style="left:1323px;top:997px;" width="7" height="9" viewBox="0 0 7 9"><path d="M5.500 1L2 4.500 5.500 8" fill="none" stroke="#606060" stroke-width="2"/></svg>
<svg style="left:1885px;top:997px;" width="7" height="9" viewBox="0 0 7 9"><path d="M1.500 1L5 4.500 1.500 8" fill="none" stroke="#606060" stroke-width="2"/></svg>
<div style="left:1335px;top:993px;width:533px;height:17px;background:#cdcdcd;"></div>
<div style="left:1337px;top:1016px;width:1px;height:21px;background:#a0a0a0;"></div>
<div style="left:1441px;top:1016px;width:1px;height:21px;background:#a0a0a0;"></div>
<div style="left:1539px;top:1016px;width:1px;height:21px;background:#a0a0a0;"></div>
<span class="t" style="left:1345px;top:1016px;letter-spacing:0.076px;">Writable</span>
<span class="t" style="left:1449px;top:1016px;letter-spacing:-0.229px;">Smart Insert</span>
<span class="t" style="left:1547.2px;top:1016px;letter-spacing:-0.671px;">52 : 1</span>
<div style="left:1635px;top:1017px;width:1px;height:2px;background:#8a8a8a;"></div>
<div style="left:1635px;top:1021px;width:1px;height:2px;background:#8a8a8a;"></div>
<div style="left:1635px;top:1025px;width:1px;height:2px;background:#8a8a8a;"></div>
<div style="left:1635px;top:1029px;width:1px;height:2px;background:#8a8a8a;"></div>
<div style="left:1635px;top:1033px;width:1px;height:2px;background:#8a8a8a;"></div>
</body></html>
